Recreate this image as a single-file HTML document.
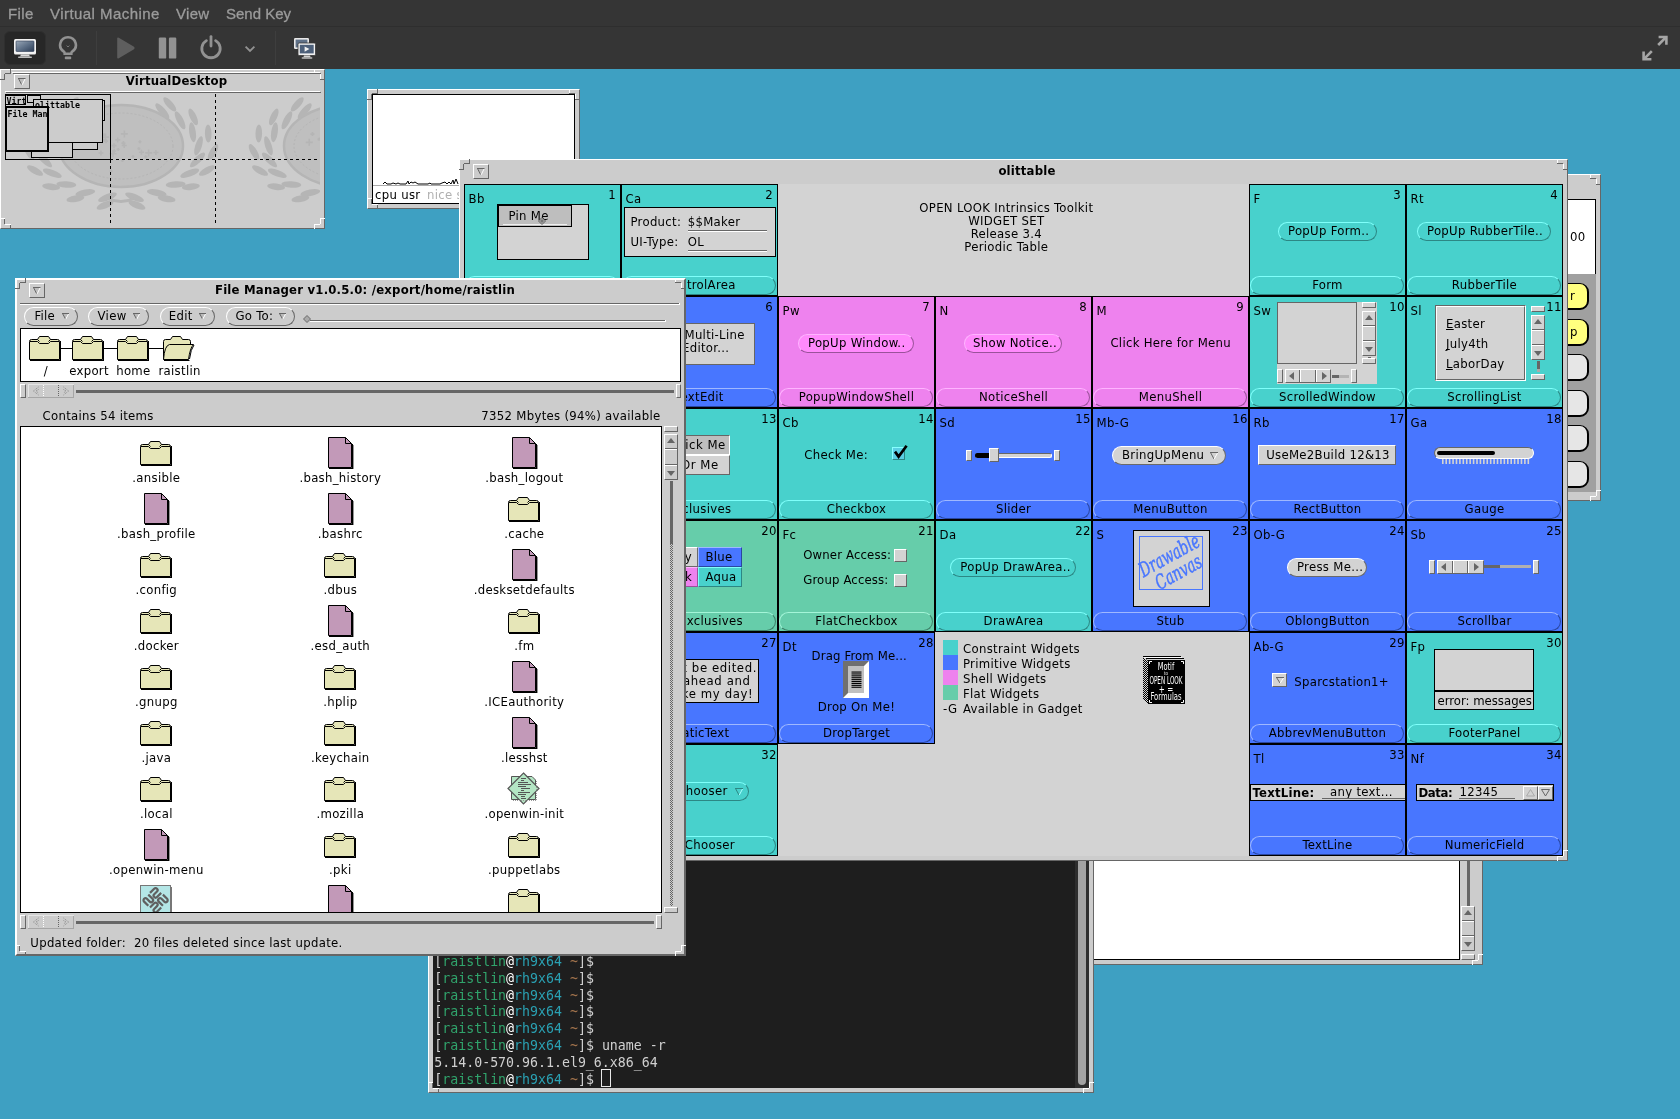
<!DOCTYPE html>
<html><head><meta charset="utf-8"><title>OpenWindows VM</title><style>
html,body{margin:0;padding:0;}
body{width:1680px;height:1119px;overflow:hidden;position:relative;background:#3ea0c2;font-family:'DejaVu Sans Condensed','DejaVu Sans','Liberation Sans',sans-serif;font-size:13px;color:#000;}
div,span,svg{position:absolute;box-sizing:border-box;}
.t span,.m span,.t u{position:static;}
.t{white-space:pre;letter-spacing:0.3px;text-decoration-skip-ink:none;}
.m{white-space:pre;font-family:'DejaVu Sans Mono','Liberation Mono',monospace;}
.tb{white-space:pre;font-family:'Liberation Sans',sans-serif;-webkit-text-stroke:0.3px #9b9b9b;}
.win{background:#cccccc;}
.pill{border:1px solid;border-radius:10px;}
</style></head><body>
<div id="root" style="left:0;top:0;width:1680px;height:1119px;will-change:transform;">
<div style="left:0px;top:0px;width:1680px;height:69px;background:#353535;"></div>
<div style="left:0px;top:26px;width:1680px;height:1px;background:#2e2e2e;"></div>
<span class="tb" style="left:8px;top:4.3px;line-height:19px;font-size:15px;color:#9b9b9b;letter-spacing:0.4px;">File</span>
<span class="tb" style="left:50px;top:4.3px;line-height:19px;font-size:15px;color:#9b9b9b;letter-spacing:0.45px;">Virtual Machine</span>
<span class="tb" style="left:176px;top:4.3px;line-height:19px;font-size:15px;color:#9b9b9b;letter-spacing:0.3px;">View</span>
<span class="tb" style="left:226px;top:4.3px;line-height:19px;font-size:15px;color:#9b9b9b;letter-spacing:0px;">Send Key</span>
<div style="left:4px;top:31px;width:42px;height:34px;background:#272727;border-radius:6px;border:1px solid #2f2f2f;"></div>
<svg style="left:13px;top:38px;" width="24" height="21" viewBox="0 0 24 21"><defs><linearGradient id="scr" x1="0" y1="0" x2="1" y2="1"><stop offset="0" stop-color="#9aa8b8"/><stop offset="0.5" stop-color="#5f7188"/><stop offset="1" stop-color="#2b3c55"/></linearGradient></defs>
<rect x="1" y="1" width="22" height="15.5" rx="1.5" fill="#f2f2f2"/><rect x="3" y="3" width="18" height="10.5" rx="0.8" fill="url(#scr)" stroke="#2f3d55" stroke-width="0.6"/>
<path d="M8,16.5 L16,16.5 L17,18.5 L7,18.5 Z" fill="#d8d8d8"/><rect x="5" y="18.5" width="14" height="1.6" rx="0.8" fill="#bdbdbd"/></svg>
<svg style="left:58px;top:35px;" width="20" height="26" viewBox="0 0 20 26"><path d="M10,2.2 a7.8,7.8 0 0 1 4.2,14.4 c-0.6,0.5 -0.9,1.2 -0.9,2.2 l-6.6,0 c0,-1 -0.3,-1.7 -0.9,-2.2 A7.8,7.8 0 0 1 10,2.2 Z" fill="none" stroke="#929292" stroke-width="2.6"/>
<rect x="6.8" y="21.6" width="6.4" height="2.6" rx="0.8" fill="#929292"/><path d="M8.6,10.6 L10,12 L11.4,10.6" stroke="#777" stroke-width="1" fill="none"/></svg>
<div style="left:96px;top:31px;width:1px;height:34px;background:#3e3e3e;"></div>
<svg style="left:115px;top:36px;" width="22" height="24" viewBox="0 0 22 24"><path d="M2.2,2.6 Q2.2,1 3.8,1.8 L19,10.8 Q20.4,12 19,13.2 L3.8,22.2 Q2.2,23 2.2,21.4 Z" fill="#5e5e5e"/></svg>
<svg style="left:158px;top:37px;" width="20" height="22" viewBox="0 0 20 22"><rect x="0.8" y="0.6" width="7.4" height="21" rx="1.2" fill="#929292"/><rect x="10.9" y="0.6" width="7.4" height="21" rx="1.2" fill="#929292"/></svg>
<svg style="left:199px;top:35px;" width="24" height="25" viewBox="0 0 24 25"><path d="M7.4,5.6 A9.2,9.2 0 1 0 16.6,5.6" fill="none" stroke="#929292" stroke-width="2.8" stroke-linecap="round"/><path d="M12,1.6 L12,11" stroke="#929292" stroke-width="2.8" stroke-linecap="round"/></svg>
<svg style="left:244px;top:45px;" width="12" height="8" viewBox="0 0 12 8"><path d="M1.6,1.6 L6,6 L10.4,1.6" fill="none" stroke="#929292" stroke-width="1.8"/></svg>
<div style="left:275px;top:31px;width:1px;height:34px;background:#3e3e3e;"></div>
<svg style="left:293px;top:37px;" width="24" height="23" viewBox="0 0 24 23"><rect x="1" y="1" width="15" height="11" rx="1.2" fill="#e8e8e8"/><rect x="2.6" y="2.6" width="11.8" height="7.8" fill="#5f7188"/>
<rect x="5" y="6" width="17.5" height="12.5" rx="1.2" fill="#f2f2f2" stroke="#353535" stroke-width="0.8"/><rect x="6.8" y="7.8" width="13.9" height="8.6" fill="#4d607a"/>
<path d="M11.6,9.4 L16.4,12.1 L11.6,14.8 Z" fill="#f2f2f2"/><path d="M11,18.5 L17,18.5 L17.6,20.3 L10.4,20.3 Z" fill="#d0d0d0"/><rect x="8.6" y="20.3" width="10.8" height="1.5" rx="0.7" fill="#bdbdbd"/></svg>
<svg style="left:1641px;top:34px;" width="28" height="28" viewBox="0 0 28 28"><g fill="none" stroke="#a6a6a6" stroke-width="2.6"><path d="M17.2,11 L24.6,3.6"/><path d="M17.6,3 L25.4,3 L25.4,10.8"/><path d="M10.8,17.2 L3.4,24.6"/><path d="M2.6,17.4 L2.6,25.2 L10.4,25.2"/></g></svg>
<div style="left:1500px;top:174px;width:101px;height:327px;background:#cccccc;border:1px solid;border-color:#ffffff #666666 #666666 #ffffff;"></div>
<svg style="left:1500px;top:174px;" width="11" height="11" viewBox="0 0 11 11"><line x1="10.5" y1="0" x2="10.5" y2="5" stroke="#666666"/><line x1="11" y1="4.5" x2="5" y2="4.5" stroke="#666666"/><line x1="4.5" y1="5" x2="4.5" y2="11" stroke="#666666"/><line x1="5" y1="10.5" x2="0" y2="10.5" stroke="#666666"/></svg>
<svg style="left:1590px;top:174px;" width="11" height="11" viewBox="0 0 11 11"><line x1="0.5" y1="0" x2="0.5" y2="5" stroke="#ffffff"/><line x1="0" y1="4.5" x2="6" y2="4.5" stroke="#666666"/><line x1="6.5" y1="5" x2="6.5" y2="11" stroke="#ffffff"/><line x1="6" y1="10.5" x2="11" y2="10.5" stroke="#666666"/></svg>
<svg style="left:1500px;top:490px;" width="11" height="11" viewBox="0 0 11 11"><line x1="10.5" y1="11" x2="10.5" y2="6" stroke="#666666"/><line x1="11" y1="6.5" x2="5" y2="6.5" stroke="#ffffff"/><line x1="4.5" y1="6" x2="4.5" y2="0" stroke="#666666"/><line x1="5" y1="0.5" x2="0" y2="0.5" stroke="#ffffff"/></svg>
<svg style="left:1590px;top:490px;" width="11" height="11" viewBox="0 0 11 11"><line x1="0.5" y1="11" x2="0.5" y2="6" stroke="#ffffff"/><line x1="0" y1="6.5" x2="6" y2="6.5" stroke="#ffffff"/><line x1="6.5" y1="6" x2="6.5" y2="0" stroke="#ffffff"/><line x1="6" y1="0.5" x2="11" y2="0.5" stroke="#ffffff"/></svg>
<div style="left:1505px;top:199px;width:91px;height:76px;background:#fff;border:1px solid #000;border-bottom:none;"></div>
<span class="t" style="left:1570px;top:229.3px;line-height:16px;">00</span>
<div style="left:1505px;top:274px;width:91px;height:218px;background:#a0a0a0;"></div>
<div style="left:1540px;top:283px;width:49px;height:27px;background:#ffff7f;border:1px solid #000;border-width:1px 2px 2px 1px;border-radius:9px;"></div>
<div style="left:1540px;top:318.6px;width:49px;height:27px;background:#ffff7f;border:1px solid #000;border-width:1px 2px 2px 1px;border-radius:9px;"></div>
<div style="left:1540px;top:354.2px;width:49px;height:27px;background:#e6e6e6;border:1px solid #000;border-width:1px 2px 2px 1px;border-radius:9px;"></div>
<div style="left:1540px;top:389.8px;width:49px;height:27px;background:#e6e6e6;border:1px solid #000;border-width:1px 2px 2px 1px;border-radius:9px;"></div>
<div style="left:1540px;top:425.4px;width:49px;height:27px;background:#e6e6e6;border:1px solid #000;border-width:1px 2px 2px 1px;border-radius:9px;"></div>
<div style="left:1540px;top:461px;width:49px;height:27px;background:#e6e6e6;border:1px solid #000;border-width:1px 2px 2px 1px;border-radius:9px;"></div>
<span class="t" style="left:1570px;top:288.3px;line-height:16px;">r</span>
<span class="t" style="left:1570px;top:324.3px;line-height:16px;">p</span>
<div style="left:1080px;top:840px;width:403px;height:125px;background:#cccccc;border:1px solid;border-color:#ffffff #666666 #666666 #ffffff;"></div>
<svg style="left:1080px;top:840px;" width="11" height="11" viewBox="0 0 11 11"><line x1="10.5" y1="0" x2="10.5" y2="5" stroke="#666666"/><line x1="11" y1="4.5" x2="5" y2="4.5" stroke="#666666"/><line x1="4.5" y1="5" x2="4.5" y2="11" stroke="#666666"/><line x1="5" y1="10.5" x2="0" y2="10.5" stroke="#666666"/></svg>
<svg style="left:1472px;top:840px;" width="11" height="11" viewBox="0 0 11 11"><line x1="0.5" y1="0" x2="0.5" y2="5" stroke="#ffffff"/><line x1="0" y1="4.5" x2="6" y2="4.5" stroke="#666666"/><line x1="6.5" y1="5" x2="6.5" y2="11" stroke="#ffffff"/><line x1="6" y1="10.5" x2="11" y2="10.5" stroke="#666666"/></svg>
<svg style="left:1080px;top:954px;" width="11" height="11" viewBox="0 0 11 11"><line x1="10.5" y1="11" x2="10.5" y2="6" stroke="#666666"/><line x1="11" y1="6.5" x2="5" y2="6.5" stroke="#ffffff"/><line x1="4.5" y1="6" x2="4.5" y2="0" stroke="#666666"/><line x1="5" y1="0.5" x2="0" y2="0.5" stroke="#ffffff"/></svg>
<svg style="left:1472px;top:954px;" width="11" height="11" viewBox="0 0 11 11"><line x1="0.5" y1="11" x2="0.5" y2="6" stroke="#ffffff"/><line x1="0" y1="6.5" x2="6" y2="6.5" stroke="#ffffff"/><line x1="6.5" y1="6" x2="6.5" y2="0" stroke="#ffffff"/><line x1="6" y1="0.5" x2="11" y2="0.5" stroke="#ffffff"/></svg>
<div style="left:1085px;top:845px;width:375px;height:115px;background:#fff;border:1px solid #000;"></div>
<div style="left:1467px;top:845px;width:3px;height:61px;background:#666666;"></div>
<div style="left:1461px;top:906px;width:14px;height:45px;background:#cccccc;border:1px solid;border-color:#ffffff #666666 #666666 #ffffff;"></div>
<div style="left:1462px;top:920px;width:12px;height:1px;background:#666666;"></div>
<div style="left:1462px;top:921px;width:12px;height:1px;background:#ffffff;"></div>
<div style="left:1462px;top:935px;width:12px;height:1px;background:#666666;"></div>
<div style="left:1462px;top:936px;width:12px;height:1px;background:#ffffff;"></div>
<svg style="left:1464px;top:909px;" width="8" height="8" viewBox="0 0 8 8"><path d="M0,6 L4.0,1 L8,6 Z" fill="#666666"/></svg>
<svg style="left:1464px;top:940px;" width="8" height="8" viewBox="0 0 8 8"><path d="M0,2 L4.0,7 L8,2 Z" fill="#666666"/></svg>
<div style="left:1461px;top:954px;width:14px;height:6px;background:#cccccc;border:1px solid;border-color:#ffffff #666666 #666666 #ffffff;"></div>
<div style="left:428px;top:760px;width:666px;height:333px;background:#cccccc;border:1px solid;border-color:#ffffff #666666 #666666 #ffffff;"></div>
<svg style="left:428px;top:760px;" width="11" height="11" viewBox="0 0 11 11"><line x1="10.5" y1="0" x2="10.5" y2="5" stroke="#666666"/><line x1="11" y1="4.5" x2="5" y2="4.5" stroke="#666666"/><line x1="4.5" y1="5" x2="4.5" y2="11" stroke="#666666"/><line x1="5" y1="10.5" x2="0" y2="10.5" stroke="#666666"/></svg>
<svg style="left:1083px;top:760px;" width="11" height="11" viewBox="0 0 11 11"><line x1="0.5" y1="0" x2="0.5" y2="5" stroke="#ffffff"/><line x1="0" y1="4.5" x2="6" y2="4.5" stroke="#666666"/><line x1="6.5" y1="5" x2="6.5" y2="11" stroke="#ffffff"/><line x1="6" y1="10.5" x2="11" y2="10.5" stroke="#666666"/></svg>
<svg style="left:428px;top:1082px;" width="11" height="11" viewBox="0 0 11 11"><line x1="10.5" y1="11" x2="10.5" y2="6" stroke="#666666"/><line x1="11" y1="6.5" x2="5" y2="6.5" stroke="#ffffff"/><line x1="4.5" y1="6" x2="4.5" y2="0" stroke="#666666"/><line x1="5" y1="0.5" x2="0" y2="0.5" stroke="#ffffff"/></svg>
<svg style="left:1083px;top:1082px;" width="11" height="11" viewBox="0 0 11 11"><line x1="0.5" y1="11" x2="0.5" y2="6" stroke="#ffffff"/><line x1="0" y1="6.5" x2="6" y2="6.5" stroke="#ffffff"/><line x1="6.5" y1="6" x2="6.5" y2="0" stroke="#ffffff"/><line x1="6" y1="0.5" x2="11" y2="0.5" stroke="#ffffff"/></svg>
<div style="left:433px;top:790px;width:656px;height:298px;background:#1e1e1e;"></div>
<div style="left:1075px;top:790px;width:14px;height:298px;background:#2d2d2d;"></div>
<div style="left:1078px;top:792px;width:8px;height:293px;background:#a3a3a3;border-radius:4px;"></div>
<span class="m" style="left:434.3px;top:952.92px;line-height:17px;font-size:13.25px;color:#d0d0d0;"><span style="color:#d0d0d0">[</span><span style="color:#30a46c">raistlin</span><span style="color:#fff">@</span><span style="color:#2aa1b3">rh9x64</span> <span style="color:#a2734c">~</span><span style="color:#d0d0d0">]$</span></span>
<span class="m" style="left:434.3px;top:969.72px;line-height:17px;font-size:13.25px;color:#d0d0d0;"><span style="color:#d0d0d0">[</span><span style="color:#30a46c">raistlin</span><span style="color:#fff">@</span><span style="color:#2aa1b3">rh9x64</span> <span style="color:#a2734c">~</span><span style="color:#d0d0d0">]$</span></span>
<span class="m" style="left:434.3px;top:986.52px;line-height:17px;font-size:13.25px;color:#d0d0d0;"><span style="color:#d0d0d0">[</span><span style="color:#30a46c">raistlin</span><span style="color:#fff">@</span><span style="color:#2aa1b3">rh9x64</span> <span style="color:#a2734c">~</span><span style="color:#d0d0d0">]$</span></span>
<span class="m" style="left:434.3px;top:1003.32px;line-height:17px;font-size:13.25px;color:#d0d0d0;"><span style="color:#d0d0d0">[</span><span style="color:#30a46c">raistlin</span><span style="color:#fff">@</span><span style="color:#2aa1b3">rh9x64</span> <span style="color:#a2734c">~</span><span style="color:#d0d0d0">]$</span></span>
<span class="m" style="left:434.3px;top:1020.12px;line-height:17px;font-size:13.25px;color:#d0d0d0;"><span style="color:#d0d0d0">[</span><span style="color:#30a46c">raistlin</span><span style="color:#fff">@</span><span style="color:#2aa1b3">rh9x64</span> <span style="color:#a2734c">~</span><span style="color:#d0d0d0">]$</span></span>
<span class="m" style="left:434.3px;top:1036.92px;line-height:17px;font-size:13.25px;color:#d0d0d0;"><span style="color:#d0d0d0">[</span><span style="color:#30a46c">raistlin</span><span style="color:#fff">@</span><span style="color:#2aa1b3">rh9x64</span> <span style="color:#a2734c">~</span><span style="color:#d0d0d0">]$</span><span style="color:#d0d0d0"> uname -r</span></span>
<span class="m" style="left:434.3px;top:1053.72px;line-height:17px;font-size:13.25px;color:#d0d0d0;"><span style="color:#d0d0d0">5.14.0-570.96.1.el9_6.x86_64</span></span>
<span class="m" style="left:434.3px;top:1070.52px;line-height:17px;font-size:13.25px;color:#d0d0d0;"><span style="color:#d0d0d0">[</span><span style="color:#30a46c">raistlin</span><span style="color:#fff">@</span><span style="color:#2aa1b3">rh9x64</span> <span style="color:#a2734c">~</span><span style="color:#d0d0d0">]$</span></span>
<div style="left:601px;top:1069px;width:10px;height:18px;border:1px solid #e8e8e8;"></div>
<div style="left:367px;top:89px;width:213px;height:120px;background:#cccccc;border:1px solid;border-color:#ffffff #666666 #666666 #ffffff;"></div>
<svg style="left:367px;top:89px;" width="11" height="11" viewBox="0 0 11 11"><line x1="10.5" y1="0" x2="10.5" y2="5" stroke="#666666"/><line x1="11" y1="4.5" x2="5" y2="4.5" stroke="#666666"/><line x1="4.5" y1="5" x2="4.5" y2="11" stroke="#666666"/><line x1="5" y1="10.5" x2="0" y2="10.5" stroke="#666666"/></svg>
<svg style="left:569px;top:89px;" width="11" height="11" viewBox="0 0 11 11"><line x1="0.5" y1="0" x2="0.5" y2="5" stroke="#ffffff"/><line x1="0" y1="4.5" x2="6" y2="4.5" stroke="#666666"/><line x1="6.5" y1="5" x2="6.5" y2="11" stroke="#ffffff"/><line x1="6" y1="10.5" x2="11" y2="10.5" stroke="#666666"/></svg>
<svg style="left:367px;top:198px;" width="11" height="11" viewBox="0 0 11 11"><line x1="10.5" y1="11" x2="10.5" y2="6" stroke="#666666"/><line x1="11" y1="6.5" x2="5" y2="6.5" stroke="#ffffff"/><line x1="4.5" y1="6" x2="4.5" y2="0" stroke="#666666"/><line x1="5" y1="0.5" x2="0" y2="0.5" stroke="#ffffff"/></svg>
<svg style="left:569px;top:198px;" width="11" height="11" viewBox="0 0 11 11"><line x1="0.5" y1="11" x2="0.5" y2="6" stroke="#ffffff"/><line x1="0" y1="6.5" x2="6" y2="6.5" stroke="#ffffff"/><line x1="6.5" y1="6" x2="6.5" y2="0" stroke="#ffffff"/><line x1="6" y1="0.5" x2="11" y2="0.5" stroke="#ffffff"/></svg>
<div style="left:372px;top:94px;width:203px;height:110px;background:#fff;border:1px solid #000;"></div>
<div style="left:373px;top:185px;width:201px;height:1px;background:#aaa;"></div>
<svg style="left:373px;top:170px;" width="100" height="16" viewBox="0 0 100 16"><path d="M10,14 L12,12 L14,14 L18,14 L20,13 L23,14 L25,13 L27,14 L33,14 L35,11 L36,14 L38,12 L40,13 L42,12 L45,14 L55,14 L57,13 L58,14 L67,14 L69,13 L72,12 L74,14 L76,12 L78,14 L80,10 L81,14 L83,9 L85,14" fill="none" stroke="#000" stroke-width="1"/></svg>
<span class="t" style="left:375px;top:187.3px;line-height:16px;">cpu usr</span>
<span class="t" style="left:427px;top:187.3px;line-height:16px;color:#b0b0b0;">nice sys</span>
<div style="left:459px;top:159px;width:1109px;height:702px;background:#cccccc;border-style:solid;border-width:1px;border-color:#ffffff #666666 #666666 #ffffff;"></div>
<svg style="left:459px;top:159px;" width="11" height="11" viewBox="0 0 11 11"><line x1="10.5" y1="0" x2="10.5" y2="5" stroke="#666666"/><line x1="11" y1="4.5" x2="5" y2="4.5" stroke="#666666"/><line x1="4.5" y1="5" x2="4.5" y2="11" stroke="#666666"/><line x1="5" y1="10.5" x2="0" y2="10.5" stroke="#666666"/></svg>
<svg style="left:1557px;top:159px;" width="11" height="11" viewBox="0 0 11 11"><line x1="0.5" y1="0" x2="0.5" y2="5" stroke="#ffffff"/><line x1="0" y1="4.5" x2="6" y2="4.5" stroke="#666666"/><line x1="6.5" y1="5" x2="6.5" y2="11" stroke="#ffffff"/><line x1="6" y1="10.5" x2="11" y2="10.5" stroke="#666666"/></svg>
<svg style="left:459px;top:850px;" width="11" height="11" viewBox="0 0 11 11"><line x1="10.5" y1="11" x2="10.5" y2="6" stroke="#666666"/><line x1="11" y1="6.5" x2="5" y2="6.5" stroke="#ffffff"/><line x1="4.5" y1="6" x2="4.5" y2="0" stroke="#666666"/><line x1="5" y1="0.5" x2="0" y2="0.5" stroke="#ffffff"/></svg>
<svg style="left:1557px;top:850px;" width="11" height="11" viewBox="0 0 11 11"><line x1="0.5" y1="11" x2="0.5" y2="6" stroke="#ffffff"/><line x1="0" y1="6.5" x2="6" y2="6.5" stroke="#ffffff"/><line x1="6.5" y1="6" x2="6.5" y2="0" stroke="#ffffff"/><line x1="6" y1="0.5" x2="11" y2="0.5" stroke="#ffffff"/></svg>
<div style="left:473px;top:164px;width:16px;height:15px;background:#cccccc;border:1px solid;border-color:#ffffff #666666 #666666 #ffffff;"></div>
<svg style="left:477px;top:168px;" width="9" height="8" viewBox="0 0 9 8"><path d="M0.8,0.8 L7.4,0.8 L4,6.6 Z" fill="#bdbdbd"/><path d="M0,0.5 L7.5,0.5" stroke="#666666"/><path d="M0.5,0.5 L3.6,6.6" stroke="#666666" fill="none"/><path d="M7,1 L4.2,6.8" stroke="#ffffff" fill="none"/></svg>
<span class="t" style="left:1027px;top:163.3px;line-height:16px;font-weight:bold;letter-spacing:0.2px;transform:translateX(-50%);">olittable</span>
<div style="left:464px;top:184px;width:1099px;height:672px;background:#d3d3d3;"></div>
<div style="left:464px;top:184px;width:157px;height:112px;background:#48d1cc;border:1px solid #000;"></div>
<span class="t" style="left:468.6px;top:191px;line-height:16px;">Bb</span>
<span class="t" style="left:612px;top:187.3px;line-height:16px;transform:translateX(-50%);">1</span>
<div style="left:465px;top:276px;width:154px;height:19px;background:#48d1cc;border:1px solid;border-color:#7ffffa #2c8784 #2c8784 #7ffffa;border-radius:9.5px;"></div>
<span class="t" style="left:542.5px;top:276.8px;line-height:16px;transform:translateX(-50%);">BulletinBoard</span>
<div style="left:497px;top:204px;width:92px;height:56px;background:#d3d3d3;border:1px solid #000;"></div>
<div style="left:498px;top:205px;width:74px;height:22px;background:#bebebe;border:1px solid #000;"></div>
<span class="t" style="left:508.5px;top:208.1px;line-height:16px;">Pin Me</span>
<div style="left:503px;top:224px;width:64px;height:1px;background:#efefef;"></div>
<svg style="left:538px;top:217px;" width="8" height="8" viewBox="0 0 8 8"><path d="M4,0.5 L7.5,4 L4,7.5 L0.5,4 Z" fill="#bbb" stroke="#333" stroke-width="0.7"/><path d="M2,4 L6,4 M4,2 L4,6" stroke="#333" stroke-width="0.6"/></svg>
<div style="left:621px;top:184px;width:157px;height:112px;background:#48d1cc;border:1px solid #000;"></div>
<span class="t" style="left:625.6px;top:191px;line-height:16px;">Ca</span>
<span class="t" style="left:769px;top:187.3px;line-height:16px;transform:translateX(-50%);">2</span>
<div style="left:622px;top:276px;width:154px;height:19px;background:#48d1cc;border:1px solid;border-color:#7ffffa #2c8784 #2c8784 #7ffffa;border-radius:9.5px;"></div>
<span class="t" style="left:699.5px;top:276.8px;line-height:16px;transform:translateX(-50%);">ControlArea</span>
<div style="left:624px;top:207px;width:152px;height:50px;background:#d3d3d3;border:1px solid #000;"></div>
<span class="t" style="left:630.5px;top:214.3px;line-height:16px;">Product:</span>
<span class="t" style="left:687.7px;top:214.3px;line-height:16px;">$$Maker</span>
<span class="t" style="left:630.5px;top:234.3px;line-height:16px;">UI-Type:</span>
<span class="t" style="left:687.7px;top:234.3px;line-height:16px;">OL</span>
<div style="left:688px;top:230px;width:79px;height:1px;background:#666666;"></div>
<div style="left:688px;top:231px;width:79px;height:1px;background:#ffffff;"></div>
<div style="left:688px;top:250px;width:79px;height:1px;background:#666666;"></div>
<div style="left:688px;top:251px;width:79px;height:1px;background:#ffffff;"></div>
<span class="t" style="left:1006.3px;top:199.8px;line-height:16px;transform:translateX(-50%);">OPEN LOOK Intrinsics Toolkit</span>
<span class="t" style="left:1006.3px;top:212.8px;line-height:16px;transform:translateX(-50%);">WIDGET SET</span>
<span class="t" style="left:1006.3px;top:225.8px;line-height:16px;transform:translateX(-50%);">Release 3.4</span>
<span class="t" style="left:1006.3px;top:238.8px;line-height:16px;transform:translateX(-50%);">Periodic Table</span>
<div style="left:1249px;top:184px;width:157px;height:112px;background:#48d1cc;border:1px solid #000;"></div>
<span class="t" style="left:1253.6px;top:191px;line-height:16px;">F</span>
<span class="t" style="left:1397px;top:187.3px;line-height:16px;transform:translateX(-50%);">3</span>
<div style="left:1250px;top:276px;width:154px;height:19px;background:#48d1cc;border:1px solid;border-color:#7ffffa #2c8784 #2c8784 #7ffffa;border-radius:9.5px;"></div>
<span class="t" style="left:1327.5px;top:276.8px;line-height:16px;transform:translateX(-50%);">Form</span>
<div style="left:1278px;top:222px;width:99px;height:19px;background:#48d1cc;border:1px solid;border-color:#7ffffa #2c8784 #2c8784 #7ffffa;border-radius:9.5px;"></div>
<span class="t" style="left:1288px;top:222.9px;line-height:16px;">PopUp Form..</span>
<div style="left:1406px;top:184px;width:157px;height:112px;background:#48d1cc;border:1px solid #000;"></div>
<span class="t" style="left:1410.6px;top:191px;line-height:16px;">Rt</span>
<span class="t" style="left:1554px;top:187.3px;line-height:16px;transform:translateX(-50%);">4</span>
<div style="left:1407px;top:276px;width:154px;height:19px;background:#48d1cc;border:1px solid;border-color:#7ffffa #2c8784 #2c8784 #7ffffa;border-radius:9.5px;"></div>
<span class="t" style="left:1484.5px;top:276.8px;line-height:16px;transform:translateX(-50%);">RubberTile</span>
<div style="left:1417px;top:222px;width:134px;height:19px;background:#48d1cc;border:1px solid;border-color:#7ffffa #2c8784 #2c8784 #7ffffa;border-radius:9.5px;"></div>
<span class="t" style="left:1427px;top:222.9px;line-height:16px;">PopUp RubberTile..</span>
<div style="left:464px;top:296px;width:157px;height:112px;background:#4876ff;border:1px solid #000;"></div>
<span class="t" style="left:612px;top:299.3px;line-height:16px;transform:translateX(-50%);">5</span>
<div style="left:465px;top:388px;width:154px;height:19px;background:#4876ff;border:1px solid;border-color:#9fb8ff #2a47a0 #2a47a0 #9fb8ff;border-radius:9.5px;"></div>
<div style="left:621px;top:296px;width:157px;height:112px;background:#4876ff;border:1px solid #000;"></div>
<span class="t" style="left:769px;top:299.3px;line-height:16px;transform:translateX(-50%);">6</span>
<div style="left:622px;top:388px;width:154px;height:19px;background:#4876ff;border:1px solid;border-color:#9fb8ff #2a47a0 #2a47a0 #9fb8ff;border-radius:9.5px;"></div>
<span class="t" style="left:699.5px;top:388.8px;line-height:16px;transform:translateX(-50%);">TextEdit</span>
<div style="left:640px;top:323px;width:115px;height:42px;background:#d3d3d3;border:1px solid #666666;"></div>
<span class="t" style="left:684.5px;top:327.3px;line-height:16px;">Multi-Line</span>
<span class="t" style="left:682px;top:340.1px;line-height:16px;">Editor...</span>
<div style="left:778px;top:296px;width:157px;height:112px;background:#ee82ee;border:1px solid #000;"></div>
<span class="t" style="left:782.6px;top:303px;line-height:16px;">Pw</span>
<span class="t" style="left:926px;top:299.3px;line-height:16px;transform:translateX(-50%);">7</span>
<div style="left:779px;top:388px;width:154px;height:19px;background:#ee82ee;border:1px solid;border-color:#ffb4ff #9a529a #9a529a #ffb4ff;border-radius:9.5px;"></div>
<span class="t" style="left:856.5px;top:388.8px;line-height:16px;transform:translateX(-50%);">PopupWindowShell</span>
<div style="left:798px;top:334px;width:116px;height:19px;background:#ff8afc;border:1px solid;border-color:#ffb4ff #9a529a #9a529a #ffb4ff;border-radius:9.5px;"></div>
<span class="t" style="left:808px;top:334.9px;line-height:16px;">PopUp Window..</span>
<div style="left:935px;top:296px;width:157px;height:112px;background:#ee82ee;border:1px solid #000;"></div>
<span class="t" style="left:939.6px;top:303px;line-height:16px;">N</span>
<span class="t" style="left:1083px;top:299.3px;line-height:16px;transform:translateX(-50%);">8</span>
<div style="left:936px;top:388px;width:154px;height:19px;background:#ee82ee;border:1px solid;border-color:#ffb4ff #9a529a #9a529a #ffb4ff;border-radius:9.5px;"></div>
<span class="t" style="left:1013.5px;top:388.8px;line-height:16px;transform:translateX(-50%);">NoticeShell</span>
<div style="left:964px;top:334px;width:98px;height:19px;background:#ff8afc;border:1px solid;border-color:#ffb4ff #9a529a #9a529a #ffb4ff;border-radius:9.5px;"></div>
<span class="t" style="left:973px;top:334.9px;line-height:16px;">Show Notice..</span>
<div style="left:1092px;top:296px;width:157px;height:112px;background:#ee82ee;border:1px solid #000;"></div>
<span class="t" style="left:1096.6px;top:303px;line-height:16px;">M</span>
<span class="t" style="left:1240px;top:299.3px;line-height:16px;transform:translateX(-50%);">9</span>
<div style="left:1093px;top:388px;width:154px;height:19px;background:#ee82ee;border:1px solid;border-color:#ffb4ff #9a529a #9a529a #ffb4ff;border-radius:9.5px;"></div>
<span class="t" style="left:1170.5px;top:388.8px;line-height:16px;transform:translateX(-50%);">MenuShell</span>
<span class="t" style="left:1110.4px;top:335.4px;line-height:16px;">Click Here for Menu</span>
<div style="left:1249px;top:296px;width:157px;height:112px;background:#48d1cc;border:1px solid #000;"></div>
<span class="t" style="left:1253.6px;top:303px;line-height:16px;">Sw</span>
<span class="t" style="left:1397px;top:299.3px;line-height:16px;transform:translateX(-50%);">10</span>
<div style="left:1250px;top:388px;width:154px;height:19px;background:#48d1cc;border:1px solid;border-color:#7ffffa #2c8784 #2c8784 #7ffffa;border-radius:9.5px;"></div>
<span class="t" style="left:1327.5px;top:388.8px;line-height:16px;transform:translateX(-50%);">ScrolledWindow</span>
<div style="left:1277px;top:302px;width:100px;height:82px;background:#d3d3d3;"></div>
<div style="left:1277px;top:302px;width:80px;height:62px;background:#d3d3d3;border:1px solid #666666;"></div>
<div style="left:1362px;top:302px;width:14px;height:6px;background:#d3d3d3;border:1px solid;border-color:#ffffff #666666 #666666 #ffffff;"></div>
<div style="left:1362px;top:311px;width:14px;height:45px;background:#d3d3d3;border:1px solid;border-color:#ffffff #666666 #666666 #ffffff;"></div>
<div style="left:1363px;top:325px;width:12px;height:1px;background:#666666;"></div>
<div style="left:1363px;top:326px;width:12px;height:1px;background:#ffffff;"></div>
<div style="left:1363px;top:340px;width:12px;height:1px;background:#666666;"></div>
<div style="left:1363px;top:341px;width:12px;height:1px;background:#ffffff;"></div>
<svg style="left:1365px;top:314px;" width="8" height="8" viewBox="0 0 8 8"><path d="M0,6 L4.0,1 L8,6 Z" fill="#666666"/></svg>
<svg style="left:1365px;top:345px;" width="8" height="8" viewBox="0 0 8 8"><path d="M0,2 L4.0,7 L8,2 Z" fill="#666666"/></svg>
<div style="left:1368px;top:356.5px;width:3px;height:1px;background:#666666;"></div>
<div style="left:1362px;top:358px;width:14px;height:6px;background:#d3d3d3;border:1px solid;border-color:#ffffff #666666 #666666 #ffffff;"></div>
<div style="left:1277px;top:369px;width:6px;height:14px;background:#d3d3d3;border:1px solid;border-color:#ffffff #666666 #666666 #ffffff;"></div>
<div style="left:1285px;top:369px;width:45.99px;height:14px;background:#d3d3d3;border:1px solid;border-color:#ffffff #666666 #666666 #ffffff;"></div>
<div style="left:1299.33px;top:370px;width:1px;height:12px;background:#666666;"></div>
<div style="left:1300.33px;top:370px;width:1px;height:12px;background:#ffffff;"></div>
<div style="left:1314.66px;top:370px;width:1px;height:12px;background:#666666;"></div>
<div style="left:1315.66px;top:370px;width:1px;height:12px;background:#ffffff;"></div>
<svg style="left:1288px;top:372px;" width="8" height="8" viewBox="0 0 8 8"><path d="M6,0 L1,4.0 L6,8 Z" fill="#666666"/></svg>
<svg style="left:1319.66px;top:372px;" width="8" height="8" viewBox="0 0 8 8"><path d="M2,0 L7,4.0 L2,8 Z" fill="#666666"/></svg>
<div style="left:1332px;top:375px;width:7px;height:3px;background:#666666;"></div>
<div style="left:1339px;top:375px;width:10px;height:3px;background:#b4b4b4;"></div>
<div style="left:1351px;top:369px;width:6px;height:14px;background:#d3d3d3;border:1px solid;border-color:#ffffff #666666 #666666 #ffffff;"></div>
<div style="left:1406px;top:296px;width:157px;height:112px;background:#48d1cc;border:1px solid #000;"></div>
<span class="t" style="left:1410.6px;top:303px;line-height:16px;">Sl</span>
<span class="t" style="left:1554px;top:299.3px;line-height:16px;transform:translateX(-50%);">11</span>
<div style="left:1407px;top:388px;width:154px;height:19px;background:#48d1cc;border:1px solid;border-color:#7ffffa #2c8784 #2c8784 #7ffffa;border-radius:9.5px;"></div>
<span class="t" style="left:1484.5px;top:388.8px;line-height:16px;transform:translateX(-50%);">ScrollingList</span>
<div style="left:1435px;top:305px;width:91px;height:76px;background:#d3d3d3;border:1px solid;border-color:#666666 #ffffff #ffffff #666666;"></div>
<div style="left:1436px;top:306px;width:89px;height:74px;border:1px solid;border-color:#ffffff #666666 #666666 #ffffff;"></div>
<span class="t" style="left:1446px;top:316.3px;line-height:16px;"><u>E</u>aster</span>
<span class="t" style="left:1446px;top:336.3px;line-height:16px;"><u>J</u>uly4th</span>
<span class="t" style="left:1446px;top:356.3px;line-height:16px;"><u>L</u>aborDay</span>
<div style="left:1531px;top:306px;width:14px;height:6px;background:#d3d3d3;border:1px solid;border-color:#ffffff #666666 #666666 #ffffff;"></div>
<div style="left:1531px;top:315px;width:14px;height:45px;background:#d3d3d3;border:1px solid;border-color:#ffffff #666666 #666666 #ffffff;"></div>
<div style="left:1532px;top:329px;width:12px;height:1px;background:#666666;"></div>
<div style="left:1532px;top:330px;width:12px;height:1px;background:#ffffff;"></div>
<div style="left:1532px;top:344px;width:12px;height:1px;background:#666666;"></div>
<div style="left:1532px;top:345px;width:12px;height:1px;background:#ffffff;"></div>
<svg style="left:1534px;top:318px;" width="8" height="8" viewBox="0 0 8 8"><path d="M0,6 L4.0,1 L8,6 Z" fill="#666666"/></svg>
<svg style="left:1534px;top:349px;" width="8" height="8" viewBox="0 0 8 8"><path d="M0,2 L4.0,7 L8,2 Z" fill="#666666"/></svg>
<div style="left:1537px;top:361px;width:3px;height:8px;background:#666666;"></div>
<div style="left:1537px;top:369px;width:3px;height:3px;background:#aaa;"></div>
<div style="left:1531px;top:374px;width:14px;height:6px;background:#d3d3d3;border:1px solid;border-color:#ffffff #666666 #666666 #ffffff;"></div>
<div style="left:464px;top:408px;width:157px;height:112px;background:#48d1cc;border:1px solid #000;"></div>
<span class="t" style="left:612px;top:411.3px;line-height:16px;transform:translateX(-50%);">12</span>
<div style="left:465px;top:500px;width:154px;height:19px;background:#48d1cc;border:1px solid;border-color:#7ffffa #2c8784 #2c8784 #7ffffa;border-radius:9.5px;"></div>
<div style="left:621px;top:408px;width:157px;height:112px;background:#48d1cc;border:1px solid #000;"></div>
<span class="t" style="left:769px;top:411.3px;line-height:16px;transform:translateX(-50%);">13</span>
<div style="left:622px;top:500px;width:154px;height:19px;background:#48d1cc;border:1px solid;border-color:#7ffffa #2c8784 #2c8784 #7ffffa;border-radius:9.5px;"></div>
<span class="t" style="left:699.5px;top:500.8px;line-height:16px;transform:translateX(-50%);">Exclusives</span>
<div style="left:660px;top:435px;width:70px;height:20px;background:#bebebe;border:1px solid;border-color:#666666 #ffffff #ffffff #666666;"></div>
<div style="left:660px;top:455px;width:70px;height:20px;background:#d3d3d3;border:1px solid;border-color:#ffffff #666666 #666666 #ffffff;"></div>
<span class="t" style="left:725.8px;top:436.7px;line-height:16px;letter-spacing:0.5px;transform:translateX(-100%);">Click Me</span>
<span class="t" style="left:718.6px;top:457.3px;line-height:16px;letter-spacing:0.5px;transform:translateX(-100%);">Or Me</span>
<div style="left:778px;top:408px;width:157px;height:112px;background:#48d1cc;border:1px solid #000;"></div>
<span class="t" style="left:782.6px;top:415px;line-height:16px;">Cb</span>
<span class="t" style="left:926px;top:411.3px;line-height:16px;transform:translateX(-50%);">14</span>
<div style="left:779px;top:500px;width:154px;height:19px;background:#48d1cc;border:1px solid;border-color:#7ffffa #2c8784 #2c8784 #7ffffa;border-radius:9.5px;"></div>
<span class="t" style="left:856.5px;top:500.8px;line-height:16px;transform:translateX(-50%);">Checkbox</span>
<span class="t" style="left:804.3px;top:447.3px;line-height:16px;">Check Me:</span>
<div style="left:892px;top:447px;width:13px;height:13px;background:#5bcfe4;border:1px solid;border-color:#8ff #2c8784 #2c8784 #8ff;"></div>
<svg style="left:892px;top:443px;" width="18" height="18" viewBox="0 0 18 18"><path d="M3,8.6 L6.6,13.6 L14.6,2.8" fill="none" stroke="#000" stroke-width="2.7"/></svg>
<div style="left:935px;top:408px;width:157px;height:112px;background:#4876ff;border:1px solid #000;"></div>
<span class="t" style="left:939.6px;top:415px;line-height:16px;">Sd</span>
<span class="t" style="left:1083px;top:411.3px;line-height:16px;transform:translateX(-50%);">15</span>
<div style="left:936px;top:500px;width:154px;height:19px;background:#4876ff;border:1px solid;border-color:#9fb8ff #2a47a0 #2a47a0 #9fb8ff;border-radius:9.5px;"></div>
<span class="t" style="left:1013.5px;top:500.8px;line-height:16px;transform:translateX(-50%);">Slider</span>
<div style="left:966px;top:450px;width:6px;height:11px;background:#d3d3d3;border:1px solid;border-color:#ffffff #666666 #666666 #ffffff;"></div>
<div style="left:975px;top:453px;width:77px;height:5px;background:#d3d3d3;border:1px solid;border-color:#666666 #ffffff #ffffff #666666;border-radius:2.5px;"></div>
<div style="left:975px;top:453px;width:16px;height:5px;background:#000;border-radius:2.5px 0 0 2.5px;"></div>
<div style="left:989px;top:448px;width:10px;height:14px;background:#d3d3d3;border:1px solid;border-color:#ffffff #666666 #666666 #ffffff;"></div>
<div style="left:1054px;top:450px;width:6px;height:11px;background:#d3d3d3;border:1px solid;border-color:#ffffff #666666 #666666 #ffffff;"></div>
<div style="left:1092px;top:408px;width:157px;height:112px;background:#4876ff;border:1px solid #000;"></div>
<span class="t" style="left:1096.6px;top:415px;line-height:16px;">Mb-G</span>
<span class="t" style="left:1240px;top:411.3px;line-height:16px;transform:translateX(-50%);">16</span>
<div style="left:1093px;top:500px;width:154px;height:19px;background:#4876ff;border:1px solid;border-color:#9fb8ff #2a47a0 #2a47a0 #9fb8ff;border-radius:9.5px;"></div>
<span class="t" style="left:1170.5px;top:500.8px;line-height:16px;transform:translateX(-50%);">MenuButton</span>
<div style="left:1112px;top:446px;width:114px;height:19px;background:#d3d3d3;border:1px solid;border-color:#ffffff #6a6a6a #6a6a6a #ffffff;border-radius:9.5px;"></div>
<span class="t" style="left:1122px;top:447px;line-height:16px;">BringUpMenu</span>
<svg style="left:1210px;top:452px;" width="9" height="8" viewBox="0 0 9 8"><path d="M0.5,0.5 L4.0,7 L7.5,0.5 Z" fill="none" stroke="none"/><path d="M0,0.5 L8,0.5" stroke="#666666"/><path d="M0.5,0.5 L4.0,7" stroke="#666666" fill="none"/><path d="M7.5,1 L4.3,7" stroke="#ffffff" fill="none"/></svg>
<div style="left:1249px;top:408px;width:157px;height:112px;background:#4876ff;border:1px solid #000;"></div>
<span class="t" style="left:1253.6px;top:415px;line-height:16px;">Rb</span>
<span class="t" style="left:1397px;top:411.3px;line-height:16px;transform:translateX(-50%);">17</span>
<div style="left:1250px;top:500px;width:154px;height:19px;background:#4876ff;border:1px solid;border-color:#9fb8ff #2a47a0 #2a47a0 #9fb8ff;border-radius:9.5px;"></div>
<span class="t" style="left:1327.5px;top:500.8px;line-height:16px;transform:translateX(-50%);">RectButton</span>
<div style="left:1258px;top:445px;width:138px;height:20px;background:#d3d3d3;border:1px solid;border-color:#ffffff #666666 #666666 #ffffff;"></div>
<span class="t" style="left:1266.2px;top:447.3px;line-height:16px;">UseMe2Build 12&amp;13</span>
<div style="left:1406px;top:408px;width:157px;height:112px;background:#4876ff;border:1px solid #000;"></div>
<span class="t" style="left:1410.6px;top:415px;line-height:16px;">Ga</span>
<span class="t" style="left:1554px;top:411.3px;line-height:16px;transform:translateX(-50%);">18</span>
<div style="left:1407px;top:500px;width:154px;height:19px;background:#4876ff;border:1px solid;border-color:#9fb8ff #2a47a0 #2a47a0 #9fb8ff;border-radius:9.5px;"></div>
<span class="t" style="left:1484.5px;top:500.8px;line-height:16px;transform:translateX(-50%);">Gauge</span>
<div style="left:1434px;top:447px;width:100px;height:12px;background:#d3d3d3;border:1px solid;border-color:#666666 #ffffff #ffffff #666666;border-radius:6px;"></div>
<div style="left:1437px;top:450.5px;width:58px;height:4px;background:#000;border-radius:2px;"></div>
<svg style="left:1441.5px;top:459px;" width="90" height="5" viewBox="0 0 90 5"><rect x="0" y="0" width="1.6" height="5" fill="#d3d3d3"/><rect x="3.42" y="0" width="1.6" height="5" fill="#d3d3d3"/><rect x="6.84" y="0" width="1.6" height="5" fill="#d3d3d3"/><rect x="10.26" y="0" width="1.6" height="5" fill="#d3d3d3"/><rect x="13.68" y="0" width="1.6" height="5" fill="#d3d3d3"/><rect x="17.1" y="0" width="1.6" height="5" fill="#d3d3d3"/><rect x="20.52" y="0" width="1.6" height="5" fill="#d3d3d3"/><rect x="23.94" y="0" width="1.6" height="5" fill="#d3d3d3"/><rect x="27.36" y="0" width="1.6" height="5" fill="#d3d3d3"/><rect x="30.78" y="0" width="1.6" height="5" fill="#d3d3d3"/><rect x="34.2" y="0" width="1.6" height="5" fill="#d3d3d3"/><rect x="37.62" y="0" width="1.6" height="5" fill="#d3d3d3"/><rect x="41.04" y="0" width="1.6" height="5" fill="#d3d3d3"/><rect x="44.46" y="0" width="1.6" height="5" fill="#d3d3d3"/><rect x="47.88" y="0" width="1.6" height="5" fill="#d3d3d3"/><rect x="51.3" y="0" width="1.6" height="5" fill="#d3d3d3"/><rect x="54.72" y="0" width="1.6" height="5" fill="#d3d3d3"/><rect x="58.14" y="0" width="1.6" height="5" fill="#d3d3d3"/><rect x="61.56" y="0" width="1.6" height="5" fill="#d3d3d3"/><rect x="64.98" y="0" width="1.6" height="5" fill="#d3d3d3"/><rect x="68.4" y="0" width="1.6" height="5" fill="#d3d3d3"/><rect x="71.82" y="0" width="1.6" height="5" fill="#d3d3d3"/><rect x="75.24" y="0" width="1.6" height="5" fill="#d3d3d3"/><rect x="78.66" y="0" width="1.6" height="5" fill="#d3d3d3"/><rect x="82.08" y="0" width="1.6" height="5" fill="#d3d3d3"/><rect x="85.5" y="0" width="1.6" height="5" fill="#d3d3d3"/></svg>
<div style="left:464px;top:520px;width:157px;height:112px;background:#66cdaa;border:1px solid #000;"></div>
<span class="t" style="left:612px;top:523.3px;line-height:16px;transform:translateX(-50%);">19</span>
<div style="left:465px;top:612px;width:154px;height:19px;background:#66cdaa;border:1px solid;border-color:#a4f5d8 #3e8269 #3e8269 #a4f5d8;border-radius:9.5px;"></div>
<div style="left:621px;top:520px;width:157px;height:112px;background:#66cdaa;border:1px solid #000;"></div>
<span class="t" style="left:769px;top:523.3px;line-height:16px;transform:translateX(-50%);">20</span>
<div style="left:622px;top:612px;width:154px;height:19px;background:#66cdaa;border:1px solid;border-color:#a4f5d8 #3e8269 #3e8269 #a4f5d8;border-radius:9.5px;"></div>
<span class="t" style="left:699.5px;top:612.8px;line-height:16px;transform:translateX(-50%);">FlatExclusives</span>
<div style="left:655px;top:547px;width:43px;height:20px;background:#d3d3d3;border:1px solid;border-color:#ffffff #6a6a6a #6a6a6a #ffffff;"></div>
<div style="left:698px;top:547px;width:44px;height:20px;background:#4876ff;border:1px solid;border-color:#9fb8ff #2a47a0 #2a47a0 #9fb8ff;"></div>
<div style="left:655px;top:567px;width:43px;height:20px;background:#ee82ee;border:1px solid;border-color:#ffb4ff #9a529a #9a529a #ffb4ff;"></div>
<div style="left:698px;top:567px;width:44px;height:20px;background:#48d1cc;border:1px solid;border-color:#7ffffa #2c8784 #2c8784 #7ffffa;"></div>
<span class="t" style="left:692px;top:548.6px;line-height:16px;transform:translateX(-100%);">Gray</span>
<span class="t" style="left:705.5px;top:548.6px;line-height:16px;">Blue</span>
<span class="t" style="left:692px;top:568.6px;line-height:16px;transform:translateX(-100%);">Pink</span>
<span class="t" style="left:705.5px;top:568.6px;line-height:16px;">Aqua</span>
<div style="left:778px;top:520px;width:157px;height:112px;background:#66cdaa;border:1px solid #000;"></div>
<span class="t" style="left:782.6px;top:527px;line-height:16px;">Fc</span>
<span class="t" style="left:926px;top:523.3px;line-height:16px;transform:translateX(-50%);">21</span>
<div style="left:779px;top:612px;width:154px;height:19px;background:#66cdaa;border:1px solid;border-color:#a4f5d8 #3e8269 #3e8269 #a4f5d8;border-radius:9.5px;"></div>
<span class="t" style="left:856.5px;top:612.8px;line-height:16px;transform:translateX(-50%);">FlatCheckbox</span>
<span class="t" style="left:803.2px;top:547.1px;line-height:16px;letter-spacing:0.15px;">Owner Access:</span>
<div style="left:894px;top:549px;width:13px;height:13px;background:#d3d3d3;border:1px solid;border-color:#ffffff #666666 #666666 #ffffff;"></div>
<span class="t" style="left:803.2px;top:571.9px;line-height:16px;letter-spacing:0.15px;">Group Access:</span>
<div style="left:894px;top:574px;width:13px;height:13px;background:#d3d3d3;border:1px solid;border-color:#ffffff #666666 #666666 #ffffff;"></div>
<div style="left:935px;top:520px;width:157px;height:112px;background:#48d1cc;border:1px solid #000;"></div>
<span class="t" style="left:939.6px;top:527px;line-height:16px;">Da</span>
<span class="t" style="left:1083px;top:523.3px;line-height:16px;transform:translateX(-50%);">22</span>
<div style="left:936px;top:612px;width:154px;height:19px;background:#48d1cc;border:1px solid;border-color:#7ffffa #2c8784 #2c8784 #7ffffa;border-radius:9.5px;"></div>
<span class="t" style="left:1013.5px;top:612.8px;line-height:16px;transform:translateX(-50%);">DrawArea</span>
<div style="left:950px;top:558px;width:126px;height:19px;background:#48d1cc;border:1px solid;border-color:#7ffffa #2c8784 #2c8784 #7ffffa;border-radius:9.5px;"></div>
<span class="t" style="left:960.3px;top:558.9px;line-height:16px;">PopUp DrawArea..</span>
<div style="left:1092px;top:520px;width:157px;height:112px;background:#4876ff;border:1px solid #000;"></div>
<span class="t" style="left:1096.6px;top:527px;line-height:16px;">S</span>
<span class="t" style="left:1240px;top:523.3px;line-height:16px;transform:translateX(-50%);">23</span>
<div style="left:1093px;top:612px;width:154px;height:19px;background:#4876ff;border:1px solid;border-color:#9fb8ff #2a47a0 #2a47a0 #9fb8ff;border-radius:9.5px;"></div>
<span class="t" style="left:1170.5px;top:612.8px;line-height:16px;transform:translateX(-50%);">Stub</span>
<div style="left:1133px;top:530px;width:77px;height:77px;background:#d3d3d3;border:1px solid #000;"></div>
<div style="left:1139px;top:536px;width:64px;height:54px;border:1px solid #4876ff;"></div>
<span class="t" style="left:1173.5px;top:563.5px;text-align:center;-webkit-text-stroke:0.5px #4876ff;font-family:'DejaVu Serif','Liberation Serif',serif;font-style:italic;font-size:20px;line-height:19px;color:#4876ff;transform:translate(-50%,-50%) rotate(-29deg) scaleX(0.68);letter-spacing:0;">Drawable<br>Canvas</span>
<div style="left:1249px;top:520px;width:157px;height:112px;background:#4876ff;border:1px solid #000;"></div>
<span class="t" style="left:1253.6px;top:527px;line-height:16px;">Ob-G</span>
<span class="t" style="left:1397px;top:523.3px;line-height:16px;transform:translateX(-50%);">24</span>
<div style="left:1250px;top:612px;width:154px;height:19px;background:#4876ff;border:1px solid;border-color:#9fb8ff #2a47a0 #2a47a0 #9fb8ff;border-radius:9.5px;"></div>
<span class="t" style="left:1327.5px;top:612.8px;line-height:16px;transform:translateX(-50%);">OblongButton</span>
<div style="left:1287px;top:558px;width:80px;height:19px;background:#d3d3d3;border:1px solid;border-color:#ffffff #6a6a6a #6a6a6a #ffffff;border-radius:9.5px;"></div>
<span class="t" style="left:1297px;top:558.5px;line-height:16px;">Press Me...</span>
<div style="left:1406px;top:520px;width:157px;height:112px;background:#4876ff;border:1px solid #000;"></div>
<span class="t" style="left:1410.6px;top:527px;line-height:16px;">Sb</span>
<span class="t" style="left:1554px;top:523.3px;line-height:16px;transform:translateX(-50%);">25</span>
<div style="left:1407px;top:612px;width:154px;height:19px;background:#4876ff;border:1px solid;border-color:#9fb8ff #2a47a0 #2a47a0 #9fb8ff;border-radius:9.5px;"></div>
<span class="t" style="left:1484.5px;top:612.8px;line-height:16px;transform:translateX(-50%);">Scrollbar</span>
<div style="left:1429px;top:560px;width:6px;height:14px;background:#d3d3d3;border:1px solid;border-color:#ffffff #666666 #666666 #ffffff;"></div>
<div style="left:1437px;top:560px;width:46.5px;height:14px;background:#d3d3d3;border:1px solid;border-color:#ffffff #666666 #666666 #ffffff;"></div>
<div style="left:1451.5px;top:561px;width:1px;height:12px;background:#666666;"></div>
<div style="left:1452.5px;top:561px;width:1px;height:12px;background:#ffffff;"></div>
<div style="left:1467px;top:561px;width:1px;height:12px;background:#666666;"></div>
<div style="left:1468px;top:561px;width:1px;height:12px;background:#ffffff;"></div>
<svg style="left:1440px;top:563px;" width="8" height="8" viewBox="0 0 8 8"><path d="M6,0 L1,4.0 L6,8 Z" fill="#666666"/></svg>
<svg style="left:1472px;top:563px;" width="8" height="8" viewBox="0 0 8 8"><path d="M2,0 L7,4.0 L2,8 Z" fill="#666666"/></svg>
<div style="left:1483px;top:565px;width:17px;height:3px;background:#666666;"></div>
<div style="left:1500px;top:565px;width:31px;height:3px;background:#b0b0b0;"></div>
<div style="left:1533px;top:560px;width:6px;height:14px;background:#d3d3d3;border:1px solid;border-color:#ffffff #666666 #666666 #ffffff;"></div>
<div style="left:464px;top:632px;width:157px;height:112px;background:#4876ff;border:1px solid #000;"></div>
<span class="t" style="left:612px;top:635.3px;line-height:16px;transform:translateX(-50%);">26</span>
<div style="left:465px;top:724px;width:154px;height:19px;background:#4876ff;border:1px solid;border-color:#9fb8ff #2a47a0 #2a47a0 #9fb8ff;border-radius:9.5px;"></div>
<div style="left:621px;top:632px;width:157px;height:112px;background:#4876ff;border:1px solid #000;"></div>
<span class="t" style="left:769px;top:635.3px;line-height:16px;transform:translateX(-50%);">27</span>
<div style="left:622px;top:724px;width:154px;height:19px;background:#4876ff;border:1px solid;border-color:#9fb8ff #2a47a0 #2a47a0 #9fb8ff;border-radius:9.5px;"></div>
<span class="t" style="left:699.5px;top:724.8px;line-height:16px;transform:translateX(-50%);">StaticText</span>
<div style="left:640px;top:659px;width:119px;height:44px;background:#d3d3d3;border:1px solid #000;"></div>
<span class="t" style="left:757px;top:660.3px;line-height:16px;transform:translateX(-100%);letter-spacing:0.6px;">This cannot be edited.</span>
<span class="t" style="left:750.5px;top:673.1px;line-height:16px;transform:translateX(-100%);letter-spacing:0.6px;">So go ahead and</span>
<span class="t" style="left:753.3px;top:686.3px;line-height:16px;transform:translateX(-100%);letter-spacing:0.6px;">make my day!</span>
<div style="left:778px;top:632px;width:157px;height:112px;background:#4876ff;border:1px solid #000;"></div>
<span class="t" style="left:782.6px;top:639px;line-height:16px;">Dt</span>
<span class="t" style="left:926px;top:635.3px;line-height:16px;transform:translateX(-50%);">28</span>
<div style="left:779px;top:724px;width:154px;height:19px;background:#4876ff;border:1px solid;border-color:#9fb8ff #2a47a0 #2a47a0 #9fb8ff;border-radius:9.5px;"></div>
<span class="t" style="left:856.5px;top:724.8px;line-height:16px;transform:translateX(-50%);">DropTarget</span>
<span class="t" style="left:811.6px;top:648px;line-height:16px;letter-spacing:0.15px;">Drag From Me...</span>
<span class="t" style="left:856.5px;top:698.7px;line-height:16px;transform:translateX(-50%);">Drop On Me!</span>
<div style="left:843px;top:661px;width:26px;height:37px;border-style:solid;border-width:5px 5px 5px 5px;border-color:#707070 #ffffff #ffffff #707070;background:#c0c0c0;"></div>
<svg style="left:850.5px;top:671px;" width="11" height="18" viewBox="0 0 11 18"><rect x="0.5" y="0.5" width="10" height="1.1" fill="#000"/><rect x="0.5" y="2.4" width="10" height="1.1" fill="#000"/><rect x="0.5" y="4.3" width="10" height="1.1" fill="#000"/><rect x="0.5" y="6.199999999999999" width="10" height="1.1" fill="#000"/><rect x="0.5" y="8.1" width="10" height="1.1" fill="#000"/><rect x="0.5" y="10.0" width="10" height="1.1" fill="#000"/><rect x="0.5" y="11.899999999999999" width="10" height="1.1" fill="#000"/><rect x="0.5" y="13.799999999999999" width="10" height="1.1" fill="#000"/><rect x="0.5" y="15.7" width="10" height="1.1" fill="#000"/></svg>
<div style="left:943px;top:640px;width:15px;height:15px;background:#48d1cc;"></div>
<span class="t" style="left:963px;top:641.1px;line-height:16px;">Constraint Widgets</span>
<div style="left:943px;top:655px;width:15px;height:15px;background:#4876ff;"></div>
<span class="t" style="left:963px;top:656.1px;line-height:16px;">Primitive Widgets</span>
<div style="left:943px;top:670px;width:15px;height:15px;background:#ee82ee;"></div>
<span class="t" style="left:963px;top:671.1px;line-height:16px;">Shell Widgets</span>
<div style="left:943px;top:685px;width:15px;height:15px;background:#66cdaa;"></div>
<span class="t" style="left:963px;top:686.1px;line-height:16px;">Flat Widgets</span>
<span class="t" style="left:943px;top:700.6px;line-height:16px;">-G</span>
<span class="t" style="left:963px;top:700.6px;line-height:16px;">Available in Gadget</span>
<svg style="left:1142px;top:655px;" width="45" height="51" viewBox="0 0 45 51"><defs><pattern id="chk" width="2" height="2" patternUnits="userSpaceOnUse"><rect width="2" height="2" fill="#d3d3d3"/><rect width="1" height="1" fill="#000"/><rect x="1" y="1" width="1" height="1" fill="#000"/></pattern></defs>
<path d="M1,2.5 L6,5.5 L6,49 L1,44 Z" fill="url(#chk)"/><path d="M1,1.5 L39,1.5 M4,3.5 L42,3.5" stroke="#000"/><path d="M2,2.5 L40,2.5" stroke="#fff"/>
<rect x="6" y="5" width="37" height="44" fill="#000"/>
<path d="M7.5,9 L7.5,6.5 L10,6.5 M39,6.5 L41.5,6.5 L41.5,9 M7.5,45 L7.5,47.5 L10,47.5 M39,47.5 L41.5,47.5 L41.5,45" stroke="#fff" fill="none"/></svg>
<span class="t" style="left:1166px;top:661.14px;line-height:12px;font-size:10px;color:#fff;transform:translateX(-50%);letter-spacing:0;transform:translateX(-50%) scaleX(0.74);">Motif</span>
<span class="t" style="left:1166px;top:670.27px;line-height:6px;font-size:5px;color:#fff;transform:translateX(-50%);letter-spacing:0;transform:translateX(-50%) scaleX(0.9);">to</span>
<span class="t" style="left:1166px;top:675.14px;line-height:12px;font-size:10px;color:#fff;transform:translateX(-50%);letter-spacing:0;transform:translateX(-50%) scaleX(0.63);">OPEN LOOK</span>
<span class="t" style="left:1166px;top:683.74px;line-height:12px;font-size:10px;color:#fff;transform:translateX(-50%);letter-spacing:0;transform:translateX(-50%) scaleX(0.8);">+ =</span>
<span class="t" style="left:1166px;top:691.34px;line-height:12px;font-size:10px;color:#fff;transform:translateX(-50%);letter-spacing:0;transform:translateX(-50%) scaleX(0.76);">Formulas</span>
<div style="left:1249px;top:632px;width:157px;height:112px;background:#4876ff;border:1px solid #000;"></div>
<span class="t" style="left:1253.6px;top:639px;line-height:16px;">Ab-G</span>
<span class="t" style="left:1397px;top:635.3px;line-height:16px;transform:translateX(-50%);">29</span>
<div style="left:1250px;top:724px;width:154px;height:19px;background:#4876ff;border:1px solid;border-color:#9fb8ff #2a47a0 #2a47a0 #9fb8ff;border-radius:9.5px;"></div>
<span class="t" style="left:1327.5px;top:724.8px;line-height:16px;transform:translateX(-50%);">AbbrevMenuButton</span>
<div style="left:1272px;top:673px;width:15px;height:14px;background:#d3d3d3;border:1px solid;border-color:#ffffff #666666 #666666 #ffffff;"></div>
<svg style="left:1275.5px;top:677px;" width="9" height="7" viewBox="0 0 9 7"><path d="M0.5,0.5 L4.0,6 L7.5,0.5 Z" fill="none" stroke="none"/><path d="M0,0.5 L8,0.5" stroke="#666666"/><path d="M0.5,0.5 L4.0,6" stroke="#666666" fill="none"/><path d="M7.5,1 L4.3,6" stroke="#ffffff" fill="none"/></svg>
<span class="t" style="left:1294.3px;top:674.3px;line-height:16px;">Sparcstation1+</span>
<div style="left:1406px;top:632px;width:157px;height:112px;background:#48d1cc;border:1px solid #000;"></div>
<span class="t" style="left:1410.6px;top:639px;line-height:16px;">Fp</span>
<span class="t" style="left:1554px;top:635.3px;line-height:16px;transform:translateX(-50%);">30</span>
<div style="left:1407px;top:724px;width:154px;height:19px;background:#48d1cc;border:1px solid;border-color:#7ffffa #2c8784 #2c8784 #7ffffa;border-radius:9.5px;"></div>
<span class="t" style="left:1484.5px;top:724.8px;line-height:16px;transform:translateX(-50%);">FooterPanel</span>
<div style="left:1434px;top:649px;width:100px;height:43px;background:#d3d3d3;border:1px solid #000;"></div>
<div style="left:1434px;top:690px;width:100px;height:20px;background:#d3d3d3;border:1px solid #000;border-top-width:2px;"></div>
<span class="t" style="left:1437.5px;top:693.3px;line-height:16px;letter-spacing:0px;">error: messages</span>
<div style="left:464px;top:744px;width:157px;height:112px;background:#48d1cc;border:1px solid #000;"></div>
<span class="t" style="left:612px;top:747.3px;line-height:16px;transform:translateX(-50%);">31</span>
<div style="left:465px;top:836px;width:154px;height:19px;background:#48d1cc;border:1px solid;border-color:#7ffffa #2c8784 #2c8784 #7ffffa;border-radius:9.5px;"></div>
<div style="left:621px;top:744px;width:157px;height:112px;background:#48d1cc;border:1px solid #000;"></div>
<span class="t" style="left:769px;top:747.3px;line-height:16px;transform:translateX(-50%);">32</span>
<div style="left:622px;top:836px;width:154px;height:19px;background:#48d1cc;border:1px solid;border-color:#7ffffa #2c8784 #2c8784 #7ffffa;border-radius:9.5px;"></div>
<span class="t" style="left:699.5px;top:836.8px;line-height:16px;transform:translateX(-50%);">FileChooser</span>
<div style="left:640px;top:782px;width:109px;height:19px;background:#48d1cc;border:1px solid;border-color:#7ffffa #2c8784 #2c8784 #7ffffa;border-radius:9.5px;"></div>
<span class="t" style="left:727.5px;top:782.9px;line-height:16px;transform:translateX(-100%);">FileChooser</span>
<svg style="left:734.5px;top:788px;" width="9" height="8" viewBox="0 0 9 8"><path d="M0.5,0.5 L4.0,7 L7.5,0.5 Z" fill="none" stroke="none"/><path d="M0,0.5 L8,0.5" stroke="#2c8784"/><path d="M0.5,0.5 L4.0,7" stroke="#2c8784" fill="none"/><path d="M7.5,1 L4.3,7" stroke="#aaffff" fill="none"/></svg>
<div style="left:1249px;top:744px;width:157px;height:112px;background:#4876ff;border:1px solid #000;"></div>
<span class="t" style="left:1253.6px;top:751px;line-height:16px;">Tl</span>
<span class="t" style="left:1397px;top:747.3px;line-height:16px;transform:translateX(-50%);">33</span>
<div style="left:1250px;top:836px;width:154px;height:19px;background:#4876ff;border:1px solid;border-color:#9fb8ff #2a47a0 #2a47a0 #9fb8ff;border-radius:9.5px;"></div>
<span class="t" style="left:1327.5px;top:836.8px;line-height:16px;transform:translateX(-50%);">TextLine</span>
<div style="left:1250px;top:784px;width:156px;height:17px;background:#d3d3d3;border:1px solid #000;"></div>
<span class="t" style="left:1252.5px;top:785.1px;line-height:16px;font-weight:bold;letter-spacing:0.25px;">TextLine:</span>
<span class="t" style="left:1330px;top:784.1px;line-height:16px;">any text...</span>
<div style="left:1322px;top:798px;width:83px;height:1px;background:#666666;"></div>
<div style="left:1406px;top:744px;width:157px;height:112px;background:#4876ff;border:1px solid #000;"></div>
<span class="t" style="left:1410.6px;top:751px;line-height:16px;">Nf</span>
<span class="t" style="left:1554px;top:747.3px;line-height:16px;transform:translateX(-50%);">34</span>
<div style="left:1407px;top:836px;width:154px;height:19px;background:#4876ff;border:1px solid;border-color:#9fb8ff #2a47a0 #2a47a0 #9fb8ff;border-radius:9.5px;"></div>
<span class="t" style="left:1484.5px;top:836.8px;line-height:16px;transform:translateX(-50%);">NumericField</span>
<div style="left:1416px;top:784px;width:138px;height:17px;background:#d3d3d3;border:1px solid #000;"></div>
<span class="t" style="left:1418.4px;top:785.1px;line-height:16px;font-weight:bold;letter-spacing:-0.4px;">Data:</span>
<span class="t" style="left:1459.6px;top:784.1px;line-height:16px;">12345</span>
<div style="left:1459px;top:798px;width:56px;height:1px;background:#666666;"></div>
<div style="left:1523px;top:786px;width:15px;height:14px;background:#d3d3d3;border:1px solid;border-color:#ffffff #666666 #666666 #ffffff;"></div>
<div style="left:1538px;top:786px;width:15px;height:14px;background:#d3d3d3;border:1px solid;border-color:#ffffff #666666 #666666 #ffffff;"></div>
<svg style="left:1526px;top:789px;" width="9" height="8" viewBox="0 0 9 8"><path d="M0.5,7 L4.5,0.5 L8.5,7 Z" fill="none" stroke="#aaa"/></svg>
<svg style="left:1541px;top:789px;" width="9" height="8" viewBox="0 0 9 8"><path d="M0.5,0.5 L8.5,0.5 L4.5,7 Z" fill="none" stroke="#666666"/></svg>
<div style="left:15px;top:278px;width:671px;height:678px;background:#cccccc;border-style:solid;border-width:2px;border-color:#ffffff #666666 #666666 #ffffff;"></div>
<svg style="left:15px;top:278px;" width="11" height="11" viewBox="0 0 11 11"><line x1="10.5" y1="0" x2="10.5" y2="5" stroke="#666666"/><line x1="11" y1="4.5" x2="5" y2="4.5" stroke="#666666"/><line x1="4.5" y1="5" x2="4.5" y2="11" stroke="#666666"/><line x1="5" y1="10.5" x2="0" y2="10.5" stroke="#666666"/></svg>
<svg style="left:675px;top:278px;" width="11" height="11" viewBox="0 0 11 11"><line x1="0.5" y1="0" x2="0.5" y2="5" stroke="#ffffff"/><line x1="0" y1="4.5" x2="6" y2="4.5" stroke="#666666"/><line x1="6.5" y1="5" x2="6.5" y2="11" stroke="#ffffff"/><line x1="6" y1="10.5" x2="11" y2="10.5" stroke="#666666"/></svg>
<svg style="left:15px;top:945px;" width="11" height="11" viewBox="0 0 11 11"><line x1="10.5" y1="11" x2="10.5" y2="6" stroke="#666666"/><line x1="11" y1="6.5" x2="5" y2="6.5" stroke="#ffffff"/><line x1="4.5" y1="6" x2="4.5" y2="0" stroke="#666666"/><line x1="5" y1="0.5" x2="0" y2="0.5" stroke="#ffffff"/></svg>
<svg style="left:675px;top:945px;" width="11" height="11" viewBox="0 0 11 11"><line x1="0.5" y1="11" x2="0.5" y2="6" stroke="#ffffff"/><line x1="0" y1="6.5" x2="6" y2="6.5" stroke="#ffffff"/><line x1="6.5" y1="6" x2="6.5" y2="0" stroke="#ffffff"/><line x1="6" y1="0.5" x2="11" y2="0.5" stroke="#ffffff"/></svg>
<div style="left:29px;top:283px;width:16px;height:15px;background:#cccccc;border:1px solid;border-color:#ffffff #666666 #666666 #ffffff;"></div>
<svg style="left:33px;top:287px;" width="9" height="8" viewBox="0 0 9 8"><path d="M0.8,0.8 L7.4,0.8 L4,6.6 Z" fill="#bdbdbd"/><path d="M0,0.5 L7.5,0.5" stroke="#666666"/><path d="M0.5,0.5 L3.6,6.6" stroke="#666666" fill="none"/><path d="M7,1 L4.2,6.8" stroke="#ffffff" fill="none"/></svg>
<span class="t" style="left:365px;top:282.3px;line-height:16px;font-weight:bold;letter-spacing:0.2px;transform:translateX(-50%);">File Manager v1.0.5.0: /export/home/raistlin</span>
<div style="left:20px;top:303px;width:660px;height:1px;background:#666666;"></div>
<div style="left:20px;top:304px;width:660px;height:1px;background:#ffffff;"></div>
<div style="left:679px;top:303px;width:1px;height:1px;background:#ffffff;"></div>
<div style="left:24px;top:307px;width:54px;height:19px;background:#cccccc;border:1px solid;border-color:#ffffff #666666 #666666 #ffffff;border-radius:9.5px;"></div>
<span class="t" style="left:34.4px;top:307.9px;line-height:16px;">File</span>
<svg style="left:62px;top:313px;" width="8" height="7" viewBox="0 0 8 7"><path d="M0.5,0.5 L3.5,6 L6.5,0.5 Z" fill="#bbbbbb" stroke="none"/><path d="M0,0.5 L7,0.5" stroke="#666666"/><path d="M0.5,0.5 L3.5,6" stroke="#666666" fill="none"/><path d="M6.5,1 L3.8,6" stroke="#ffffff" fill="none"/></svg>
<div style="left:88px;top:307px;width:61px;height:19px;background:#cccccc;border:1px solid;border-color:#ffffff #666666 #666666 #ffffff;border-radius:9.5px;"></div>
<span class="t" style="left:97.6px;top:307.9px;line-height:16px;">View</span>
<svg style="left:133px;top:313px;" width="8" height="7" viewBox="0 0 8 7"><path d="M0.5,0.5 L3.5,6 L6.5,0.5 Z" fill="#bbbbbb" stroke="none"/><path d="M0,0.5 L7,0.5" stroke="#666666"/><path d="M0.5,0.5 L3.5,6" stroke="#666666" fill="none"/><path d="M6.5,1 L3.8,6" stroke="#ffffff" fill="none"/></svg>
<div style="left:160px;top:307px;width:55px;height:19px;background:#cccccc;border:1px solid;border-color:#ffffff #666666 #666666 #ffffff;border-radius:9.5px;"></div>
<span class="t" style="left:168.8px;top:307.9px;line-height:16px;">Edit</span>
<svg style="left:199px;top:313px;" width="8" height="7" viewBox="0 0 8 7"><path d="M0.5,0.5 L3.5,6 L6.5,0.5 Z" fill="#bbbbbb" stroke="none"/><path d="M0,0.5 L7,0.5" stroke="#666666"/><path d="M0.5,0.5 L3.5,6" stroke="#666666" fill="none"/><path d="M6.5,1 L3.8,6" stroke="#ffffff" fill="none"/></svg>
<div style="left:226px;top:307px;width:69px;height:19px;background:#cccccc;border:1px solid;border-color:#ffffff #666666 #666666 #ffffff;border-radius:9.5px;"></div>
<span class="t" style="left:235.4px;top:307.9px;line-height:16px;">Go To:</span>
<svg style="left:279px;top:313px;" width="8" height="7" viewBox="0 0 8 7"><path d="M0.5,0.5 L3.5,6 L6.5,0.5 Z" fill="#bbbbbb" stroke="none"/><path d="M0,0.5 L7,0.5" stroke="#666666"/><path d="M0.5,0.5 L3.5,6" stroke="#666666" fill="none"/><path d="M6.5,1 L3.8,6" stroke="#ffffff" fill="none"/></svg>
<svg style="left:303px;top:315px;" width="8" height="8" viewBox="0 0 8 8"><path d="M4,0.5 L7.5,4 L4,7.5 L0.5,4 Z" fill="#aaa" stroke="#555" stroke-width="0.8"/></svg>
<div style="left:310px;top:320px;width:356px;height:1px;background:#666666;"></div>
<div style="left:310px;top:321px;width:356px;height:1px;background:#ffffff;"></div>
<div style="left:665px;top:320px;width:1px;height:1px;background:#ffffff;"></div>
<div style="left:20px;top:328px;width:661px;height:54px;background:#fff;border:1px solid #000;"></div>
<div style="left:60px;top:348px;width:13px;height:1px;background:#000;"></div>
<div style="left:104px;top:348px;width:14px;height:1px;background:#000;"></div>
<div style="left:149px;top:348px;width:15px;height:1px;background:#000;"></div>
<svg style="left:29px;top:336px;" width="33" height="26" viewBox="0 0 33 26"><path d="M0.5,5.5 Q0.5,3.5 2.5,3.5 L8.5,3.5 L10.5,0.5 L19.5,0.5 L21.5,3.5 L28.5,3.5 Q30.5,3.5 30.5,5.5 L30.5,23.5 L0.5,23.5 Z" fill="#e6e6b8" stroke="#000"/>
<path d="M1,5.5 L8.5,5.5 L10.5,7.5 L19.5,7.5 L21.5,5.5 L30,5.5" fill="none" stroke="#000"/><path d="M8.5,3.5 L10.5,5.5 M21.5,3.5 L19.5,5.5" stroke="#000" fill="none"/>
<path d="M31.5,5 L31.5,25 M1,24.5 L32,24.5" stroke="#000" fill="none"/></svg>
<svg style="left:72px;top:336px;" width="33" height="26" viewBox="0 0 33 26"><path d="M0.5,5.5 Q0.5,3.5 2.5,3.5 L8.5,3.5 L10.5,0.5 L19.5,0.5 L21.5,3.5 L28.5,3.5 Q30.5,3.5 30.5,5.5 L30.5,23.5 L0.5,23.5 Z" fill="#e6e6b8" stroke="#000"/>
<path d="M1,5.5 L8.5,5.5 L10.5,7.5 L19.5,7.5 L21.5,5.5 L30,5.5" fill="none" stroke="#000"/><path d="M8.5,3.5 L10.5,5.5 M21.5,3.5 L19.5,5.5" stroke="#000" fill="none"/>
<path d="M31.5,5 L31.5,25 M1,24.5 L32,24.5" stroke="#000" fill="none"/></svg>
<svg style="left:117px;top:336px;" width="33" height="26" viewBox="0 0 33 26"><path d="M0.5,5.5 Q0.5,3.5 2.5,3.5 L8.5,3.5 L10.5,0.5 L19.5,0.5 L21.5,3.5 L28.5,3.5 Q30.5,3.5 30.5,5.5 L30.5,23.5 L0.5,23.5 Z" fill="#e6e6b8" stroke="#000"/>
<path d="M1,5.5 L8.5,5.5 L10.5,7.5 L19.5,7.5 L21.5,5.5 L30,5.5" fill="none" stroke="#000"/><path d="M8.5,3.5 L10.5,5.5 M21.5,3.5 L19.5,5.5" stroke="#000" fill="none"/>
<path d="M31.5,5 L31.5,25 M1,24.5 L32,24.5" stroke="#000" fill="none"/></svg>
<svg style="left:161px;top:336px;" width="34" height="26" viewBox="0 0 34 26"><path d="M2.5,23.5 L2.5,5.5 Q2.5,3.5 4.5,3.5 L9.5,3.5 L11.5,0.5 L19.5,0.5 L21.5,3.5 L27.5,3.5 Q29.5,3.5 29.5,5.5 L29.5,8.5" fill="#e6e6b8" stroke="#000"/>
<path d="M2.5,23.5 Q3.5,9.5 8.5,8.5 L32.5,8.5 Q29,12 27.5,23.5 Z" fill="#e6e6b8" stroke="#000"/>
<path d="M3,24.5 L28.5,24.5 M28.5,23 Q29.8,13 33,9" stroke="#000" fill="none"/></svg>
<span class="t" style="left:45.8px;top:362.8px;line-height:16px;transform:translateX(-50%);">/</span>
<span class="t" style="left:89px;top:362.8px;line-height:16px;transform:translateX(-50%);">export</span>
<span class="t" style="left:133.4px;top:362.8px;line-height:16px;transform:translateX(-50%);">home</span>
<span class="t" style="left:179.6px;top:362.8px;line-height:16px;transform:translateX(-50%);">raistlin</span>
<div style="left:20px;top:384px;width:6px;height:14px;background:#cccccc;border:1px solid;border-color:#ffffff #666666 #666666 #ffffff;"></div>
<svg style="left:28px;top:384px;" width="47" height="15" viewBox="0 0 47 15"><rect x="0.5" y="0.5" width="45" height="13" fill="none" stroke="#ffffff" stroke-dasharray="1 1"/><path d="M0.5,13.5 L45.5,13.5 L45.5,0.5" fill="none" stroke="#666666" stroke-dasharray="1 1"/>
<path d="M15.5,1 L15.5,13" stroke="#ffffff" stroke-dasharray="1 1"/><path d="M30.5,1 L30.5,13" stroke="#666666" stroke-dasharray="1 1"/>
<g fill="none" stroke="#888" stroke-dasharray="1 1"><path d="M10.5,3 L5.5,7 L10.5,11 M10.5,5.5 L8,7 L10.5,9"/><path d="M35.5,3 L40.5,7 L35.5,11 M35.5,5.5 L38,7 L35.5,9"/></g></svg>
<div style="left:76px;top:390px;width:598px;height:3px;background:#666666;"></div>
<div style="left:676px;top:384px;width:5px;height:14px;background:#cccccc;border:1px solid;border-color:#ffffff #666666 #666666 #ffffff;"></div>
<span class="t" style="left:42.5px;top:407.6px;line-height:16px;">Contains 54 items</span>
<span class="t" style="left:660.6px;top:407.6px;line-height:16px;transform:translateX(-100%);">7352 Mbytes (94%) available</span>
<div style="left:20px;top:426px;width:642px;height:487px;background:#fff;border:1px solid #000;overflow:hidden;">
<svg style="left:119px;top:14px;" width="33" height="26" viewBox="0 0 33 26"><path d="M0.5,5.5 Q0.5,3.5 2.5,3.5 L8.5,3.5 L10.5,0.5 L19.5,0.5 L21.5,3.5 L28.5,3.5 Q30.5,3.5 30.5,5.5 L30.5,23.5 L0.5,23.5 Z" fill="#e6e6b8" stroke="#000"/>
<path d="M1,5.5 L8.5,5.5 L10.5,7.5 L19.5,7.5 L21.5,5.5 L30,5.5" fill="none" stroke="#000"/><path d="M8.5,3.5 L10.5,5.5 M21.5,3.5 L19.5,5.5" stroke="#000" fill="none"/>
<path d="M31.5,5 L31.5,25 M1,24.5 L32,24.5" stroke="#000" fill="none"/></svg>
<span class="t" style="left:135.3px;top:42.7px;line-height:16px;transform:translateX(-50%);">.ansible</span>
<svg style="left:307px;top:10px;" width="26" height="33" viewBox="0 0 26 33"><path d="M0.5,0.5 L17.5,0.5 L23.5,6.5 L23.5,30.5 L0.5,30.5 Z" fill="#c299b8" stroke="#000"/><path d="M17.5,0.5 L17.5,6.5 L23.5,6.5" fill="none" stroke="#000"/>
<path d="M24.5,7 L24.5,32 M1,31.5 L25,31.5" stroke="#000" fill="none"/><path d="M25.2,8 L25.2,32" stroke="#000" stroke-width="0.6" fill="none"/></svg>
<span class="t" style="left:319.3px;top:42.7px;line-height:16px;transform:translateX(-50%);">.bash_history</span>
<svg style="left:491px;top:10px;" width="26" height="33" viewBox="0 0 26 33"><path d="M0.5,0.5 L17.5,0.5 L23.5,6.5 L23.5,30.5 L0.5,30.5 Z" fill="#c299b8" stroke="#000"/><path d="M17.5,0.5 L17.5,6.5 L23.5,6.5" fill="none" stroke="#000"/>
<path d="M24.5,7 L24.5,32 M1,31.5 L25,31.5" stroke="#000" fill="none"/><path d="M25.2,8 L25.2,32" stroke="#000" stroke-width="0.6" fill="none"/></svg>
<span class="t" style="left:503.3px;top:42.7px;line-height:16px;transform:translateX(-50%);">.bash_logout</span>
<svg style="left:123px;top:66px;" width="26" height="33" viewBox="0 0 26 33"><path d="M0.5,0.5 L17.5,0.5 L23.5,6.5 L23.5,30.5 L0.5,30.5 Z" fill="#c299b8" stroke="#000"/><path d="M17.5,0.5 L17.5,6.5 L23.5,6.5" fill="none" stroke="#000"/>
<path d="M24.5,7 L24.5,32 M1,31.5 L25,31.5" stroke="#000" fill="none"/><path d="M25.2,8 L25.2,32" stroke="#000" stroke-width="0.6" fill="none"/></svg>
<span class="t" style="left:135.3px;top:98.7px;line-height:16px;transform:translateX(-50%);">.bash_profile</span>
<svg style="left:307px;top:66px;" width="26" height="33" viewBox="0 0 26 33"><path d="M0.5,0.5 L17.5,0.5 L23.5,6.5 L23.5,30.5 L0.5,30.5 Z" fill="#c299b8" stroke="#000"/><path d="M17.5,0.5 L17.5,6.5 L23.5,6.5" fill="none" stroke="#000"/>
<path d="M24.5,7 L24.5,32 M1,31.5 L25,31.5" stroke="#000" fill="none"/><path d="M25.2,8 L25.2,32" stroke="#000" stroke-width="0.6" fill="none"/></svg>
<span class="t" style="left:319.3px;top:98.7px;line-height:16px;transform:translateX(-50%);">.bashrc</span>
<svg style="left:487px;top:70px;" width="33" height="26" viewBox="0 0 33 26"><path d="M0.5,5.5 Q0.5,3.5 2.5,3.5 L8.5,3.5 L10.5,0.5 L19.5,0.5 L21.5,3.5 L28.5,3.5 Q30.5,3.5 30.5,5.5 L30.5,23.5 L0.5,23.5 Z" fill="#e6e6b8" stroke="#000"/>
<path d="M1,5.5 L8.5,5.5 L10.5,7.5 L19.5,7.5 L21.5,5.5 L30,5.5" fill="none" stroke="#000"/><path d="M8.5,3.5 L10.5,5.5 M21.5,3.5 L19.5,5.5" stroke="#000" fill="none"/>
<path d="M31.5,5 L31.5,25 M1,24.5 L32,24.5" stroke="#000" fill="none"/></svg>
<span class="t" style="left:503.3px;top:98.7px;line-height:16px;transform:translateX(-50%);">.cache</span>
<svg style="left:119px;top:126px;" width="33" height="26" viewBox="0 0 33 26"><path d="M0.5,5.5 Q0.5,3.5 2.5,3.5 L8.5,3.5 L10.5,0.5 L19.5,0.5 L21.5,3.5 L28.5,3.5 Q30.5,3.5 30.5,5.5 L30.5,23.5 L0.5,23.5 Z" fill="#e6e6b8" stroke="#000"/>
<path d="M1,5.5 L8.5,5.5 L10.5,7.5 L19.5,7.5 L21.5,5.5 L30,5.5" fill="none" stroke="#000"/><path d="M8.5,3.5 L10.5,5.5 M21.5,3.5 L19.5,5.5" stroke="#000" fill="none"/>
<path d="M31.5,5 L31.5,25 M1,24.5 L32,24.5" stroke="#000" fill="none"/></svg>
<span class="t" style="left:135.3px;top:154.7px;line-height:16px;transform:translateX(-50%);">.config</span>
<svg style="left:303px;top:126px;" width="33" height="26" viewBox="0 0 33 26"><path d="M0.5,5.5 Q0.5,3.5 2.5,3.5 L8.5,3.5 L10.5,0.5 L19.5,0.5 L21.5,3.5 L28.5,3.5 Q30.5,3.5 30.5,5.5 L30.5,23.5 L0.5,23.5 Z" fill="#e6e6b8" stroke="#000"/>
<path d="M1,5.5 L8.5,5.5 L10.5,7.5 L19.5,7.5 L21.5,5.5 L30,5.5" fill="none" stroke="#000"/><path d="M8.5,3.5 L10.5,5.5 M21.5,3.5 L19.5,5.5" stroke="#000" fill="none"/>
<path d="M31.5,5 L31.5,25 M1,24.5 L32,24.5" stroke="#000" fill="none"/></svg>
<span class="t" style="left:319.3px;top:154.7px;line-height:16px;transform:translateX(-50%);">.dbus</span>
<svg style="left:491px;top:122px;" width="26" height="33" viewBox="0 0 26 33"><path d="M0.5,0.5 L17.5,0.5 L23.5,6.5 L23.5,30.5 L0.5,30.5 Z" fill="#c299b8" stroke="#000"/><path d="M17.5,0.5 L17.5,6.5 L23.5,6.5" fill="none" stroke="#000"/>
<path d="M24.5,7 L24.5,32 M1,31.5 L25,31.5" stroke="#000" fill="none"/><path d="M25.2,8 L25.2,32" stroke="#000" stroke-width="0.6" fill="none"/></svg>
<span class="t" style="left:503.3px;top:154.7px;line-height:16px;transform:translateX(-50%);">.desksetdefaults</span>
<svg style="left:119px;top:182px;" width="33" height="26" viewBox="0 0 33 26"><path d="M0.5,5.5 Q0.5,3.5 2.5,3.5 L8.5,3.5 L10.5,0.5 L19.5,0.5 L21.5,3.5 L28.5,3.5 Q30.5,3.5 30.5,5.5 L30.5,23.5 L0.5,23.5 Z" fill="#e6e6b8" stroke="#000"/>
<path d="M1,5.5 L8.5,5.5 L10.5,7.5 L19.5,7.5 L21.5,5.5 L30,5.5" fill="none" stroke="#000"/><path d="M8.5,3.5 L10.5,5.5 M21.5,3.5 L19.5,5.5" stroke="#000" fill="none"/>
<path d="M31.5,5 L31.5,25 M1,24.5 L32,24.5" stroke="#000" fill="none"/></svg>
<span class="t" style="left:135.3px;top:210.7px;line-height:16px;transform:translateX(-50%);">.docker</span>
<svg style="left:307px;top:178px;" width="26" height="33" viewBox="0 0 26 33"><path d="M0.5,0.5 L17.5,0.5 L23.5,6.5 L23.5,30.5 L0.5,30.5 Z" fill="#c299b8" stroke="#000"/><path d="M17.5,0.5 L17.5,6.5 L23.5,6.5" fill="none" stroke="#000"/>
<path d="M24.5,7 L24.5,32 M1,31.5 L25,31.5" stroke="#000" fill="none"/><path d="M25.2,8 L25.2,32" stroke="#000" stroke-width="0.6" fill="none"/></svg>
<span class="t" style="left:319.3px;top:210.7px;line-height:16px;transform:translateX(-50%);">.esd_auth</span>
<svg style="left:487px;top:182px;" width="33" height="26" viewBox="0 0 33 26"><path d="M0.5,5.5 Q0.5,3.5 2.5,3.5 L8.5,3.5 L10.5,0.5 L19.5,0.5 L21.5,3.5 L28.5,3.5 Q30.5,3.5 30.5,5.5 L30.5,23.5 L0.5,23.5 Z" fill="#e6e6b8" stroke="#000"/>
<path d="M1,5.5 L8.5,5.5 L10.5,7.5 L19.5,7.5 L21.5,5.5 L30,5.5" fill="none" stroke="#000"/><path d="M8.5,3.5 L10.5,5.5 M21.5,3.5 L19.5,5.5" stroke="#000" fill="none"/>
<path d="M31.5,5 L31.5,25 M1,24.5 L32,24.5" stroke="#000" fill="none"/></svg>
<span class="t" style="left:503.3px;top:210.7px;line-height:16px;transform:translateX(-50%);">.fm</span>
<svg style="left:119px;top:238px;" width="33" height="26" viewBox="0 0 33 26"><path d="M0.5,5.5 Q0.5,3.5 2.5,3.5 L8.5,3.5 L10.5,0.5 L19.5,0.5 L21.5,3.5 L28.5,3.5 Q30.5,3.5 30.5,5.5 L30.5,23.5 L0.5,23.5 Z" fill="#e6e6b8" stroke="#000"/>
<path d="M1,5.5 L8.5,5.5 L10.5,7.5 L19.5,7.5 L21.5,5.5 L30,5.5" fill="none" stroke="#000"/><path d="M8.5,3.5 L10.5,5.5 M21.5,3.5 L19.5,5.5" stroke="#000" fill="none"/>
<path d="M31.5,5 L31.5,25 M1,24.5 L32,24.5" stroke="#000" fill="none"/></svg>
<span class="t" style="left:135.3px;top:266.7px;line-height:16px;transform:translateX(-50%);">.gnupg</span>
<svg style="left:303px;top:238px;" width="33" height="26" viewBox="0 0 33 26"><path d="M0.5,5.5 Q0.5,3.5 2.5,3.5 L8.5,3.5 L10.5,0.5 L19.5,0.5 L21.5,3.5 L28.5,3.5 Q30.5,3.5 30.5,5.5 L30.5,23.5 L0.5,23.5 Z" fill="#e6e6b8" stroke="#000"/>
<path d="M1,5.5 L8.5,5.5 L10.5,7.5 L19.5,7.5 L21.5,5.5 L30,5.5" fill="none" stroke="#000"/><path d="M8.5,3.5 L10.5,5.5 M21.5,3.5 L19.5,5.5" stroke="#000" fill="none"/>
<path d="M31.5,5 L31.5,25 M1,24.5 L32,24.5" stroke="#000" fill="none"/></svg>
<span class="t" style="left:319.3px;top:266.7px;line-height:16px;transform:translateX(-50%);">.hplip</span>
<svg style="left:491px;top:234px;" width="26" height="33" viewBox="0 0 26 33"><path d="M0.5,0.5 L17.5,0.5 L23.5,6.5 L23.5,30.5 L0.5,30.5 Z" fill="#c299b8" stroke="#000"/><path d="M17.5,0.5 L17.5,6.5 L23.5,6.5" fill="none" stroke="#000"/>
<path d="M24.5,7 L24.5,32 M1,31.5 L25,31.5" stroke="#000" fill="none"/><path d="M25.2,8 L25.2,32" stroke="#000" stroke-width="0.6" fill="none"/></svg>
<span class="t" style="left:503.3px;top:266.7px;line-height:16px;transform:translateX(-50%);">.ICEauthority</span>
<svg style="left:119px;top:294px;" width="33" height="26" viewBox="0 0 33 26"><path d="M0.5,5.5 Q0.5,3.5 2.5,3.5 L8.5,3.5 L10.5,0.5 L19.5,0.5 L21.5,3.5 L28.5,3.5 Q30.5,3.5 30.5,5.5 L30.5,23.5 L0.5,23.5 Z" fill="#e6e6b8" stroke="#000"/>
<path d="M1,5.5 L8.5,5.5 L10.5,7.5 L19.5,7.5 L21.5,5.5 L30,5.5" fill="none" stroke="#000"/><path d="M8.5,3.5 L10.5,5.5 M21.5,3.5 L19.5,5.5" stroke="#000" fill="none"/>
<path d="M31.5,5 L31.5,25 M1,24.5 L32,24.5" stroke="#000" fill="none"/></svg>
<span class="t" style="left:135.3px;top:322.7px;line-height:16px;transform:translateX(-50%);">.java</span>
<svg style="left:303px;top:294px;" width="33" height="26" viewBox="0 0 33 26"><path d="M0.5,5.5 Q0.5,3.5 2.5,3.5 L8.5,3.5 L10.5,0.5 L19.5,0.5 L21.5,3.5 L28.5,3.5 Q30.5,3.5 30.5,5.5 L30.5,23.5 L0.5,23.5 Z" fill="#e6e6b8" stroke="#000"/>
<path d="M1,5.5 L8.5,5.5 L10.5,7.5 L19.5,7.5 L21.5,5.5 L30,5.5" fill="none" stroke="#000"/><path d="M8.5,3.5 L10.5,5.5 M21.5,3.5 L19.5,5.5" stroke="#000" fill="none"/>
<path d="M31.5,5 L31.5,25 M1,24.5 L32,24.5" stroke="#000" fill="none"/></svg>
<span class="t" style="left:319.3px;top:322.7px;line-height:16px;transform:translateX(-50%);">.keychain</span>
<svg style="left:491px;top:290px;" width="26" height="33" viewBox="0 0 26 33"><path d="M0.5,0.5 L17.5,0.5 L23.5,6.5 L23.5,30.5 L0.5,30.5 Z" fill="#c299b8" stroke="#000"/><path d="M17.5,0.5 L17.5,6.5 L23.5,6.5" fill="none" stroke="#000"/>
<path d="M24.5,7 L24.5,32 M1,31.5 L25,31.5" stroke="#000" fill="none"/><path d="M25.2,8 L25.2,32" stroke="#000" stroke-width="0.6" fill="none"/></svg>
<span class="t" style="left:503.3px;top:322.7px;line-height:16px;transform:translateX(-50%);">.lesshst</span>
<svg style="left:119px;top:350px;" width="33" height="26" viewBox="0 0 33 26"><path d="M0.5,5.5 Q0.5,3.5 2.5,3.5 L8.5,3.5 L10.5,0.5 L19.5,0.5 L21.5,3.5 L28.5,3.5 Q30.5,3.5 30.5,5.5 L30.5,23.5 L0.5,23.5 Z" fill="#e6e6b8" stroke="#000"/>
<path d="M1,5.5 L8.5,5.5 L10.5,7.5 L19.5,7.5 L21.5,5.5 L30,5.5" fill="none" stroke="#000"/><path d="M8.5,3.5 L10.5,5.5 M21.5,3.5 L19.5,5.5" stroke="#000" fill="none"/>
<path d="M31.5,5 L31.5,25 M1,24.5 L32,24.5" stroke="#000" fill="none"/></svg>
<span class="t" style="left:135.3px;top:378.7px;line-height:16px;transform:translateX(-50%);">.local</span>
<svg style="left:303px;top:350px;" width="33" height="26" viewBox="0 0 33 26"><path d="M0.5,5.5 Q0.5,3.5 2.5,3.5 L8.5,3.5 L10.5,0.5 L19.5,0.5 L21.5,3.5 L28.5,3.5 Q30.5,3.5 30.5,5.5 L30.5,23.5 L0.5,23.5 Z" fill="#e6e6b8" stroke="#000"/>
<path d="M1,5.5 L8.5,5.5 L10.5,7.5 L19.5,7.5 L21.5,5.5 L30,5.5" fill="none" stroke="#000"/><path d="M8.5,3.5 L10.5,5.5 M21.5,3.5 L19.5,5.5" stroke="#000" fill="none"/>
<path d="M31.5,5 L31.5,25 M1,24.5 L32,24.5" stroke="#000" fill="none"/></svg>
<span class="t" style="left:319.3px;top:378.7px;line-height:16px;transform:translateX(-50%);">.mozilla</span>
<svg style="left:485.5px;top:344.7px;" width="34" height="34" viewBox="0 0 34 34"><g stroke="#555" fill="#b4e6c4"><path d="M4.5,4.5 L25,4.5 L28.5,8 L28.5,27.5 L4.5,27.5 Z"/><path d="M16.5,1 L32,16.5 L16.5,32 L1,16.5 Z" stroke-width="1.2"/></g><line x1="14" y1="6.5" x2="19" y2="6.5" stroke="#555"/><line x1="14" y1="8.5" x2="17" y2="8.5" stroke="#555"/><line x1="11" y1="10.5" x2="21" y2="10.5" stroke="#555"/><line x1="11" y1="12.5" x2="24" y2="12.5" stroke="#555"/><line x1="11" y1="14.5" x2="19" y2="14.5" stroke="#555"/><line x1="14" y1="16.5" x2="23" y2="16.5" stroke="#555"/><line x1="14" y1="18.5" x2="17" y2="18.5" stroke="#555"/><line x1="11" y1="20.5" x2="23" y2="20.5" stroke="#555"/><line x1="11" y1="22.5" x2="19" y2="22.5" stroke="#555"/><line x1="14" y1="24.5" x2="18" y2="24.5" stroke="#555"/><line x1="14" y1="26.5" x2="19" y2="26.5" stroke="#555"/><path d="M29.5,9 L29.5,28.5 L6,28.5" stroke="#999" stroke-dasharray="1 1" fill="none"/></svg>
<span class="t" style="left:503.3px;top:378.7px;line-height:16px;transform:translateX(-50%);">.openwin-init</span>
<svg style="left:123px;top:402px;" width="26" height="33" viewBox="0 0 26 33"><path d="M0.5,0.5 L17.5,0.5 L23.5,6.5 L23.5,30.5 L0.5,30.5 Z" fill="#c299b8" stroke="#000"/><path d="M17.5,0.5 L17.5,6.5 L23.5,6.5" fill="none" stroke="#000"/>
<path d="M24.5,7 L24.5,32 M1,31.5 L25,31.5" stroke="#000" fill="none"/><path d="M25.2,8 L25.2,32" stroke="#000" stroke-width="0.6" fill="none"/></svg>
<span class="t" style="left:135.3px;top:434.7px;line-height:16px;transform:translateX(-50%);">.openwin-menu</span>
<svg style="left:303px;top:406px;" width="33" height="26" viewBox="0 0 33 26"><path d="M0.5,5.5 Q0.5,3.5 2.5,3.5 L8.5,3.5 L10.5,0.5 L19.5,0.5 L21.5,3.5 L28.5,3.5 Q30.5,3.5 30.5,5.5 L30.5,23.5 L0.5,23.5 Z" fill="#e6e6b8" stroke="#000"/>
<path d="M1,5.5 L8.5,5.5 L10.5,7.5 L19.5,7.5 L21.5,5.5 L30,5.5" fill="none" stroke="#000"/><path d="M8.5,3.5 L10.5,5.5 M21.5,3.5 L19.5,5.5" stroke="#000" fill="none"/>
<path d="M31.5,5 L31.5,25 M1,24.5 L32,24.5" stroke="#000" fill="none"/></svg>
<span class="t" style="left:319.3px;top:434.7px;line-height:16px;transform:translateX(-50%);">.pki</span>
<svg style="left:487px;top:406px;" width="33" height="26" viewBox="0 0 33 26"><path d="M0.5,5.5 Q0.5,3.5 2.5,3.5 L8.5,3.5 L10.5,0.5 L19.5,0.5 L21.5,3.5 L28.5,3.5 Q30.5,3.5 30.5,5.5 L30.5,23.5 L0.5,23.5 Z" fill="#e6e6b8" stroke="#000"/>
<path d="M1,5.5 L8.5,5.5 L10.5,7.5 L19.5,7.5 L21.5,5.5 L30,5.5" fill="none" stroke="#000"/><path d="M8.5,3.5 L10.5,5.5 M21.5,3.5 L19.5,5.5" stroke="#000" fill="none"/>
<path d="M31.5,5 L31.5,25 M1,24.5 L32,24.5" stroke="#000" fill="none"/></svg>
<span class="t" style="left:503.3px;top:434.7px;line-height:16px;transform:translateX(-50%);">.puppetlabs</span>
<svg style="left:119px;top:458px;" width="33" height="32" viewBox="0 0 33 32"><rect x="0.5" y="0.5" width="30" height="30" fill="#b4e6e6" stroke="#777"/><path d="M31.5,2 L31.5,31" stroke="#777"/><g transform="translate(15.6 15.2) rotate(45) scale(1.1)" fill="none" stroke="#606060" stroke-width="2"><g transform="rotate(0)"><path d="M-8.3,-1.1 L-8.3,-6.5 A1.8,1.8 0 0 1 -4.7,-6.5 L-4.7,-2.9 A1.8,1.8 0 0 0 -1.1,-2.9 L-1.1,-8.3"/></g><g transform="rotate(90)"><path d="M-8.3,-1.1 L-8.3,-6.5 A1.8,1.8 0 0 1 -4.7,-6.5 L-4.7,-2.9 A1.8,1.8 0 0 0 -1.1,-2.9 L-1.1,-8.3"/></g><g transform="rotate(180)"><path d="M-8.3,-1.1 L-8.3,-6.5 A1.8,1.8 0 0 1 -4.7,-6.5 L-4.7,-2.9 A1.8,1.8 0 0 0 -1.1,-2.9 L-1.1,-8.3"/></g><g transform="rotate(270)"><path d="M-8.3,-1.1 L-8.3,-6.5 A1.8,1.8 0 0 1 -4.7,-6.5 L-4.7,-2.9 A1.8,1.8 0 0 0 -1.1,-2.9 L-1.1,-8.3"/></g></g></svg>
<svg style="left:307px;top:458px;" width="26" height="33" viewBox="0 0 26 33"><path d="M0.5,0.5 L17.5,0.5 L23.5,6.5 L23.5,30.5 L0.5,30.5 Z" fill="#c299b8" stroke="#000"/><path d="M17.5,0.5 L17.5,6.5 L23.5,6.5" fill="none" stroke="#000"/>
<path d="M24.5,7 L24.5,32 M1,31.5 L25,31.5" stroke="#000" fill="none"/><path d="M25.2,8 L25.2,32" stroke="#000" stroke-width="0.6" fill="none"/></svg>
<svg style="left:487px;top:462px;" width="33" height="26" viewBox="0 0 33 26"><path d="M0.5,5.5 Q0.5,3.5 2.5,3.5 L8.5,3.5 L10.5,0.5 L19.5,0.5 L21.5,3.5 L28.5,3.5 Q30.5,3.5 30.5,5.5 L30.5,23.5 L0.5,23.5 Z" fill="#e6e6b8" stroke="#000"/>
<path d="M1,5.5 L8.5,5.5 L10.5,7.5 L19.5,7.5 L21.5,5.5 L30,5.5" fill="none" stroke="#000"/><path d="M8.5,3.5 L10.5,5.5 M21.5,3.5 L19.5,5.5" stroke="#000" fill="none"/>
<path d="M31.5,5 L31.5,25 M1,24.5 L32,24.5" stroke="#000" fill="none"/></svg>
</div>
<div style="left:664px;top:426px;width:14px;height:6px;background:#cccccc;border:1px solid;border-color:#ffffff #666666 #666666 #ffffff;"></div>
<div style="left:664px;top:434px;width:14px;height:45.99px;background:#cccccc;border:1px solid;border-color:#ffffff #666666 #666666 #ffffff;"></div>
<div style="left:665px;top:448.33px;width:12px;height:1px;background:#666666;"></div>
<div style="left:665px;top:449.33px;width:12px;height:1px;background:#ffffff;"></div>
<div style="left:665px;top:463.66px;width:12px;height:1px;background:#666666;"></div>
<div style="left:665px;top:464.66px;width:12px;height:1px;background:#ffffff;"></div>
<svg style="left:667px;top:437px;" width="8" height="8" viewBox="0 0 8 8"><path d="M0,6 L4.0,1 L8,6 Z" fill="#666666"/></svg>
<svg style="left:667px;top:468.66px;" width="8" height="8" viewBox="0 0 8 8"><path d="M0,2 L4.0,7 L8,2 Z" fill="#666666"/></svg>
<div style="left:670px;top:481px;width:3px;height:63px;background:#666666;"></div>
<svg style="left:670px;top:544px;" width="3" height="362" viewBox="0 0 3 362"><defs><pattern id="stp" width="2" height="2" patternUnits="userSpaceOnUse"><rect width="1" height="1" fill="#666666"/><rect x="1" y="1" width="1" height="1" fill="#666666"/></pattern></defs><rect width="3" height="362" fill="url(#stp)"/></svg>
<div style="left:664px;top:907px;width:14px;height:6px;background:#cccccc;border:1px solid;border-color:#ffffff #666666 #666666 #ffffff;"></div>
<div style="left:20px;top:915px;width:6px;height:14px;background:#cccccc;border:1px solid;border-color:#ffffff #666666 #666666 #ffffff;"></div>
<svg style="left:28px;top:915px;" width="47" height="15" viewBox="0 0 47 15"><rect x="0.5" y="0.5" width="45" height="13" fill="none" stroke="#ffffff" stroke-dasharray="1 1"/><path d="M0.5,13.5 L45.5,13.5 L45.5,0.5" fill="none" stroke="#666666" stroke-dasharray="1 1"/>
<path d="M15.5,1 L15.5,13" stroke="#ffffff" stroke-dasharray="1 1"/><path d="M30.5,1 L30.5,13" stroke="#666666" stroke-dasharray="1 1"/>
<g fill="none" stroke="#888" stroke-dasharray="1 1"><path d="M10.5,3 L5.5,7 L10.5,11 M10.5,5.5 L8,7 L10.5,9"/><path d="M35.5,3 L40.5,7 L35.5,11 M35.5,5.5 L38,7 L35.5,9"/></g></svg>
<div style="left:76px;top:921px;width:578px;height:3px;background:#666666;"></div>
<div style="left:656px;top:915px;width:6px;height:14px;background:#cccccc;border:1px solid;border-color:#ffffff #666666 #666666 #ffffff;"></div>
<span class="t" style="left:30.3px;top:935px;line-height:16px;">Updated folder:  20 files deleted since last update.</span>
<div style="left:0px;top:69px;width:325px;height:160px;background:#cccccc;border-style:solid;border-width:1px;border-color:#ffffff #666666 #666666 #ffffff;"></div>
<svg style="left:0px;top:69px;" width="11" height="11" viewBox="0 0 11 11"><line x1="10.5" y1="0" x2="10.5" y2="5" stroke="#666666"/><line x1="11" y1="4.5" x2="5" y2="4.5" stroke="#666666"/><line x1="4.5" y1="5" x2="4.5" y2="11" stroke="#666666"/><line x1="5" y1="10.5" x2="0" y2="10.5" stroke="#666666"/></svg>
<svg style="left:314px;top:69px;" width="11" height="11" viewBox="0 0 11 11"><line x1="0.5" y1="0" x2="0.5" y2="5" stroke="#ffffff"/><line x1="0" y1="4.5" x2="6" y2="4.5" stroke="#666666"/><line x1="6.5" y1="5" x2="6.5" y2="11" stroke="#ffffff"/><line x1="6" y1="10.5" x2="11" y2="10.5" stroke="#666666"/></svg>
<svg style="left:0px;top:218px;" width="11" height="11" viewBox="0 0 11 11"><line x1="10.5" y1="11" x2="10.5" y2="6" stroke="#666666"/><line x1="11" y1="6.5" x2="5" y2="6.5" stroke="#ffffff"/><line x1="4.5" y1="6" x2="4.5" y2="0" stroke="#666666"/><line x1="5" y1="0.5" x2="0" y2="0.5" stroke="#ffffff"/></svg>
<svg style="left:314px;top:218px;" width="11" height="11" viewBox="0 0 11 11"><line x1="0.5" y1="11" x2="0.5" y2="6" stroke="#ffffff"/><line x1="0" y1="6.5" x2="6" y2="6.5" stroke="#ffffff"/><line x1="6.5" y1="6" x2="6.5" y2="0" stroke="#ffffff"/><line x1="6" y1="0.5" x2="11" y2="0.5" stroke="#ffffff"/></svg>
<div style="left:14px;top:74px;width:16px;height:15px;background:#cccccc;border:1px solid;border-color:#ffffff #666666 #666666 #ffffff;"></div>
<svg style="left:18px;top:78px;" width="9" height="8" viewBox="0 0 9 8"><path d="M0.8,0.8 L7.4,0.8 L4,6.6 Z" fill="#bdbdbd"/><path d="M0,0.5 L7.5,0.5" stroke="#666666"/><path d="M0.5,0.5 L3.6,6.6" stroke="#666666" fill="none"/><path d="M7,1 L4.2,6.8" stroke="#ffffff" fill="none"/></svg>
<span class="t" style="left:176.5px;top:73.3px;line-height:16px;font-weight:bold;letter-spacing:0.2px;transform:translateX(-50%);">VirtualDesktop</span>
<div style="left:12px;top:72px;width:308px;height:1px;background:#ffffff;"></div>
<div style="left:13px;top:73px;width:308px;height:1px;background:#666666;"></div>
<div style="left:5px;top:91px;width:315px;height:1px;background:#ffffff;"></div>
<div style="left:6px;top:92px;width:315px;height:1px;background:#666666;"></div>
<div style="left:5px;top:94px;width:315px;height:129px;overflow:hidden;">
<svg style="left:0px;top:0px;" width="315" height="129" viewBox="0 0 315 129"><ellipse cx="116" cy="52" rx="62" ry="41" fill="#bfbfbf"/><ellipse cx="116" cy="52" rx="62" ry="41" fill="none" stroke="#b5b5b5" stroke-width="2.5"/><ellipse cx="116" cy="52" rx="52" ry="33" fill="none" stroke="#b5b5b5" stroke-width="1" stroke-dasharray="2 2"/><path d="M111.63,55.55 L114.63,55.55 M113.13,54.05 L113.13,57.05" stroke="#b5b5b5" stroke-width="1.6"/><path d="M133.96,58.21 L138.96,58.21 M136.46,55.71 L136.46,60.71" stroke="#b5b5b5" stroke-width="1.6"/><path d="M80.45,40.09 L84.45,40.09 M82.45,38.09 L82.45,42.09" stroke="#b5b5b5" stroke-width="1.6"/><path d="M132.42,54.67 L135.42,54.67 M133.92,53.17 L133.92,56.17" stroke="#b5b5b5" stroke-width="1.6"/><path d="M115.87,66.5 L118.87,66.5 M117.37,65 L117.37,68" stroke="#b5b5b5" stroke-width="1.6"/><path d="M116.44,49.11 L120.44,49.11 M118.44,47.11 L118.44,51.11" stroke="#b5b5b5" stroke-width="1.6"/><path d="M97.61,40.76 L100.61,40.76 M99.11,39.26 L99.11,42.26" stroke="#b5b5b5" stroke-width="1.6"/><path d="M99.08,47.13 L103.08,47.13 M101.08,45.13 L101.08,49.13" stroke="#b5b5b5" stroke-width="1.6"/><path d="M148.43,58.53 L153.43,58.53 M150.93,56.03 L150.93,61.03" stroke="#b5b5b5" stroke-width="1.6"/><path d="M93.42,58.93 L98.42,58.93 M95.92,56.43 L95.92,61.43" stroke="#b5b5b5" stroke-width="1.6"/><path d="M87.57,45.36 L90.57,45.36 M89.07,43.86 L89.07,46.86" stroke="#b5b5b5" stroke-width="1.6"/><path d="M89.84,43.74 L94.84,43.74 M92.34,41.24 L92.34,46.24" stroke="#b5b5b5" stroke-width="1.6"/><path d="M139.27,62.78 L142.27,62.78 M140.77,61.28 L140.77,64.28" stroke="#b5b5b5" stroke-width="1.6"/><path d="M97.03,43.11 L104.03,43.11 M100.53,39.61 L100.53,46.61" stroke="#b5b5b5" stroke-width="1.6"/><path d="M115.87,39.91 L122.87,39.91 M119.37,36.41 L119.37,43.41" stroke="#b5b5b5" stroke-width="1.6"/><path d="M107.19,57 L111.19,57 M109.19,55 L109.19,59" stroke="#b5b5b5" stroke-width="1.6"/><path d="M110.23,45.9 L115.23,45.9 M112.73,43.4 L112.73,48.4" stroke="#b5b5b5" stroke-width="1.6"/><path d="M75.77,48.37 L82.77,48.37 M79.27,44.87 L79.27,51.87" stroke="#b5b5b5" stroke-width="1.6"/><path d="M104.67,77.1 L107.67,77.1 M106.17,75.6 L106.17,78.6" stroke="#b5b5b5" stroke-width="1.6"/><path d="M106.51,51.67 L111.51,51.67 M109.01,49.17 L109.01,54.17" stroke="#b5b5b5" stroke-width="1.6"/><path d="M126.5,62.52 L129.5,62.52 M128,61.02 L128,64.02" stroke="#b5b5b5" stroke-width="1.6"/><path d="M116.71,51.52 L121.71,51.52 M119.21,49.02 L119.21,54.02" stroke="#b5b5b5" stroke-width="1.6"/><path d="M104.52,59.79 L111.52,59.79 M108.02,56.29 L108.02,63.29" stroke="#b5b5b5" stroke-width="1.6"/><path d="M97.5,46.22 L100.5,46.22 M99,44.72 L99,47.72" stroke="#b5b5b5" stroke-width="1.6"/><path d="M133.44,47.74 L136.44,47.74 M134.94,46.24 L134.94,49.24" stroke="#b5b5b5" stroke-width="1.6"/><path d="M140.17,58.88 L147.17,58.88 M143.67,55.38 L143.67,62.38" stroke="#b5b5b5" stroke-width="1.6"/><ellipse cx="102.46" cy="103.29" rx="10" ry="3.3" fill="#b5b5b5" transform="rotate(-201.94 102.46 103.29)"/><ellipse cx="80.29" cy="98.78" rx="10" ry="3.3" fill="#b5b5b5" transform="rotate(-190.76 80.29 98.78)"/><ellipse cx="61.33" cy="90.52" rx="10" ry="3.3" fill="#b5b5b5" transform="rotate(-177.37 61.33 90.52)"/><ellipse cx="47.29" cy="79.25" rx="10" ry="3.3" fill="#b5b5b5" transform="rotate(-159.72 47.29 79.25)"/><ellipse cx="39.43" cy="65.97" rx="10" ry="3.3" fill="#b5b5b5" transform="rotate(-135.88 39.43 65.97)"/><ellipse cx="38.46" cy="51.88" rx="10" ry="3.3" fill="#b5b5b5" transform="rotate(-107.7 38.46 51.88)"/><ellipse cx="44.47" cy="38.26" rx="10" ry="3.3" fill="#b5b5b5" transform="rotate(-82.19 44.47 38.26)"/><ellipse cx="56.91" cy="26.32" rx="10" ry="3.3" fill="#b5b5b5" transform="rotate(-62.97 56.91 26.32)"/><ellipse cx="74.67" cy="17.14" rx="10" ry="3.3" fill="#b5b5b5" transform="rotate(-48.63 74.67 17.14)"/><ellipse cx="100.02" cy="111.16" rx="9" ry="3.3" fill="#b5b5b5" transform="rotate(-201.98 100.02 111.16)"/><ellipse cx="70.4" cy="104.77" rx="9" ry="3.3" fill="#b5b5b5" transform="rotate(-189.16 70.4 104.77)"/><ellipse cx="46.12" cy="92.77" rx="9" ry="3.3" fill="#b5b5b5" transform="rotate(-173.08 46.12 92.77)"/><ellipse cx="30.03" cy="76.58" rx="9" ry="3.3" fill="#b5b5b5" transform="rotate(-150.51 30.03 76.58)"/><ellipse cx="24.02" cy="58.1" rx="9" ry="3.3" fill="#b5b5b5" transform="rotate(-119.91 24.02 58.1)"/><ellipse cx="28.79" cy="39.48" rx="9" ry="3.3" fill="#b5b5b5" transform="rotate(-88.66 28.79 39.48)"/><ellipse cx="43.79" cy="22.92" rx="9" ry="3.3" fill="#b5b5b5" transform="rotate(-65.14 43.79 22.92)"/><ellipse cx="67.25" cy="10.36" rx="9" ry="3.3" fill="#b5b5b5" transform="rotate(-48.48 67.25 10.36)"/><ellipse cx="129.54" cy="103.29" rx="10" ry="3.3" fill="#b5b5b5" transform="rotate(21.94 129.54 103.29)"/><ellipse cx="151.71" cy="98.78" rx="10" ry="3.3" fill="#b5b5b5" transform="rotate(10.76 151.71 98.78)"/><ellipse cx="170.67" cy="90.52" rx="10" ry="3.3" fill="#b5b5b5" transform="rotate(-2.63 170.67 90.52)"/><ellipse cx="184.71" cy="79.25" rx="10" ry="3.3" fill="#b5b5b5" transform="rotate(-20.28 184.71 79.25)"/><ellipse cx="192.57" cy="65.97" rx="10" ry="3.3" fill="#b5b5b5" transform="rotate(-44.12 192.57 65.97)"/><ellipse cx="193.54" cy="51.88" rx="10" ry="3.3" fill="#b5b5b5" transform="rotate(-72.3 193.54 51.88)"/><ellipse cx="187.53" cy="38.26" rx="10" ry="3.3" fill="#b5b5b5" transform="rotate(-97.81 187.53 38.26)"/><ellipse cx="175.09" cy="26.32" rx="10" ry="3.3" fill="#b5b5b5" transform="rotate(-117.03 175.09 26.32)"/><ellipse cx="157.33" cy="17.14" rx="10" ry="3.3" fill="#b5b5b5" transform="rotate(-131.37 157.33 17.14)"/><ellipse cx="131.98" cy="111.16" rx="9" ry="3.3" fill="#b5b5b5" transform="rotate(21.98 131.98 111.16)"/><ellipse cx="161.6" cy="104.77" rx="9" ry="3.3" fill="#b5b5b5" transform="rotate(9.16 161.6 104.77)"/><ellipse cx="185.88" cy="92.77" rx="9" ry="3.3" fill="#b5b5b5" transform="rotate(-6.92 185.88 92.77)"/><ellipse cx="201.97" cy="76.58" rx="9" ry="3.3" fill="#b5b5b5" transform="rotate(-29.49 201.97 76.58)"/><ellipse cx="207.98" cy="58.1" rx="9" ry="3.3" fill="#b5b5b5" transform="rotate(-60.09 207.98 58.1)"/><ellipse cx="203.21" cy="39.48" rx="9" ry="3.3" fill="#b5b5b5" transform="rotate(-91.34 203.21 39.48)"/><ellipse cx="188.21" cy="22.92" rx="9" ry="3.3" fill="#b5b5b5" transform="rotate(-114.86 188.21 22.92)"/><ellipse cx="164.75" cy="10.36" rx="9" ry="3.3" fill="#b5b5b5" transform="rotate(-131.52 164.75 10.36)"/><path d="M102,104 Q116,111 130,104" stroke="#b5b5b5" stroke-width="3" fill="none"/><ellipse cx="341" cy="52" rx="62" ry="41" fill="#bfbfbf"/><ellipse cx="341" cy="52" rx="62" ry="41" fill="none" stroke="#b5b5b5" stroke-width="2.5"/><ellipse cx="341" cy="52" rx="52" ry="33" fill="none" stroke="#b5b5b5" stroke-width="1" stroke-dasharray="2 2"/><path d="M336.63,55.55 L339.63,55.55 M338.13,54.05 L338.13,57.05" stroke="#b5b5b5" stroke-width="1.6"/><path d="M358.96,58.21 L363.96,58.21 M361.46,55.71 L361.46,60.71" stroke="#b5b5b5" stroke-width="1.6"/><path d="M305.45,40.09 L309.45,40.09 M307.45,38.09 L307.45,42.09" stroke="#b5b5b5" stroke-width="1.6"/><path d="M357.42,54.67 L360.42,54.67 M358.92,53.17 L358.92,56.17" stroke="#b5b5b5" stroke-width="1.6"/><path d="M340.87,66.5 L343.87,66.5 M342.37,65 L342.37,68" stroke="#b5b5b5" stroke-width="1.6"/><path d="M341.44,49.11 L345.44,49.11 M343.44,47.11 L343.44,51.11" stroke="#b5b5b5" stroke-width="1.6"/><path d="M322.61,40.76 L325.61,40.76 M324.11,39.26 L324.11,42.26" stroke="#b5b5b5" stroke-width="1.6"/><path d="M324.08,47.13 L328.08,47.13 M326.08,45.13 L326.08,49.13" stroke="#b5b5b5" stroke-width="1.6"/><path d="M373.43,58.53 L378.43,58.53 M375.93,56.03 L375.93,61.03" stroke="#b5b5b5" stroke-width="1.6"/><path d="M318.42,58.93 L323.42,58.93 M320.92,56.43 L320.92,61.43" stroke="#b5b5b5" stroke-width="1.6"/><path d="M312.57,45.36 L315.57,45.36 M314.07,43.86 L314.07,46.86" stroke="#b5b5b5" stroke-width="1.6"/><path d="M314.84,43.74 L319.84,43.74 M317.34,41.24 L317.34,46.24" stroke="#b5b5b5" stroke-width="1.6"/><path d="M364.27,62.78 L367.27,62.78 M365.77,61.28 L365.77,64.28" stroke="#b5b5b5" stroke-width="1.6"/><path d="M322.03,43.11 L329.03,43.11 M325.53,39.61 L325.53,46.61" stroke="#b5b5b5" stroke-width="1.6"/><path d="M340.87,39.91 L347.87,39.91 M344.37,36.41 L344.37,43.41" stroke="#b5b5b5" stroke-width="1.6"/><path d="M332.19,57 L336.19,57 M334.19,55 L334.19,59" stroke="#b5b5b5" stroke-width="1.6"/><path d="M335.23,45.9 L340.23,45.9 M337.73,43.4 L337.73,48.4" stroke="#b5b5b5" stroke-width="1.6"/><path d="M300.77,48.37 L307.77,48.37 M304.27,44.87 L304.27,51.87" stroke="#b5b5b5" stroke-width="1.6"/><path d="M329.67,77.1 L332.67,77.1 M331.17,75.6 L331.17,78.6" stroke="#b5b5b5" stroke-width="1.6"/><path d="M331.51,51.67 L336.51,51.67 M334.01,49.17 L334.01,54.17" stroke="#b5b5b5" stroke-width="1.6"/><path d="M351.5,62.52 L354.5,62.52 M353,61.02 L353,64.02" stroke="#b5b5b5" stroke-width="1.6"/><path d="M341.71,51.52 L346.71,51.52 M344.21,49.02 L344.21,54.02" stroke="#b5b5b5" stroke-width="1.6"/><path d="M329.52,59.79 L336.52,59.79 M333.02,56.29 L333.02,63.29" stroke="#b5b5b5" stroke-width="1.6"/><path d="M322.5,46.22 L325.5,46.22 M324,44.72 L324,47.72" stroke="#b5b5b5" stroke-width="1.6"/><path d="M358.44,47.74 L361.44,47.74 M359.94,46.24 L359.94,49.24" stroke="#b5b5b5" stroke-width="1.6"/><path d="M365.17,58.88 L372.17,58.88 M368.67,55.38 L368.67,62.38" stroke="#b5b5b5" stroke-width="1.6"/><ellipse cx="327.46" cy="103.29" rx="10" ry="3.3" fill="#b5b5b5" transform="rotate(-201.94 327.46 103.29)"/><ellipse cx="305.29" cy="98.78" rx="10" ry="3.3" fill="#b5b5b5" transform="rotate(-190.76 305.29 98.78)"/><ellipse cx="286.33" cy="90.52" rx="10" ry="3.3" fill="#b5b5b5" transform="rotate(-177.37 286.33 90.52)"/><ellipse cx="272.29" cy="79.25" rx="10" ry="3.3" fill="#b5b5b5" transform="rotate(-159.72 272.29 79.25)"/><ellipse cx="264.43" cy="65.97" rx="10" ry="3.3" fill="#b5b5b5" transform="rotate(-135.88 264.43 65.97)"/><ellipse cx="263.46" cy="51.88" rx="10" ry="3.3" fill="#b5b5b5" transform="rotate(-107.7 263.46 51.88)"/><ellipse cx="269.47" cy="38.26" rx="10" ry="3.3" fill="#b5b5b5" transform="rotate(-82.19 269.47 38.26)"/><ellipse cx="281.91" cy="26.32" rx="10" ry="3.3" fill="#b5b5b5" transform="rotate(-62.97 281.91 26.32)"/><ellipse cx="299.67" cy="17.14" rx="10" ry="3.3" fill="#b5b5b5" transform="rotate(-48.63 299.67 17.14)"/><ellipse cx="325.02" cy="111.16" rx="9" ry="3.3" fill="#b5b5b5" transform="rotate(-201.98 325.02 111.16)"/><ellipse cx="295.4" cy="104.77" rx="9" ry="3.3" fill="#b5b5b5" transform="rotate(-189.16 295.4 104.77)"/><ellipse cx="271.12" cy="92.77" rx="9" ry="3.3" fill="#b5b5b5" transform="rotate(-173.08 271.12 92.77)"/><ellipse cx="255.03" cy="76.58" rx="9" ry="3.3" fill="#b5b5b5" transform="rotate(-150.51 255.03 76.58)"/><ellipse cx="249.02" cy="58.1" rx="9" ry="3.3" fill="#b5b5b5" transform="rotate(-119.91 249.02 58.1)"/><ellipse cx="253.79" cy="39.48" rx="9" ry="3.3" fill="#b5b5b5" transform="rotate(-88.66 253.79 39.48)"/><ellipse cx="268.79" cy="22.92" rx="9" ry="3.3" fill="#b5b5b5" transform="rotate(-65.14 268.79 22.92)"/><ellipse cx="292.25" cy="10.36" rx="9" ry="3.3" fill="#b5b5b5" transform="rotate(-48.48 292.25 10.36)"/><ellipse cx="354.54" cy="103.29" rx="10" ry="3.3" fill="#b5b5b5" transform="rotate(21.94 354.54 103.29)"/><ellipse cx="376.71" cy="98.78" rx="10" ry="3.3" fill="#b5b5b5" transform="rotate(10.76 376.71 98.78)"/><ellipse cx="395.67" cy="90.52" rx="10" ry="3.3" fill="#b5b5b5" transform="rotate(-2.63 395.67 90.52)"/><ellipse cx="409.71" cy="79.25" rx="10" ry="3.3" fill="#b5b5b5" transform="rotate(-20.28 409.71 79.25)"/><ellipse cx="417.57" cy="65.97" rx="10" ry="3.3" fill="#b5b5b5" transform="rotate(-44.12 417.57 65.97)"/><ellipse cx="418.54" cy="51.88" rx="10" ry="3.3" fill="#b5b5b5" transform="rotate(-72.3 418.54 51.88)"/><ellipse cx="412.53" cy="38.26" rx="10" ry="3.3" fill="#b5b5b5" transform="rotate(-97.81 412.53 38.26)"/><ellipse cx="400.09" cy="26.32" rx="10" ry="3.3" fill="#b5b5b5" transform="rotate(-117.03 400.09 26.32)"/><ellipse cx="382.33" cy="17.14" rx="10" ry="3.3" fill="#b5b5b5" transform="rotate(-131.37 382.33 17.14)"/><ellipse cx="356.98" cy="111.16" rx="9" ry="3.3" fill="#b5b5b5" transform="rotate(21.98 356.98 111.16)"/><ellipse cx="386.6" cy="104.77" rx="9" ry="3.3" fill="#b5b5b5" transform="rotate(9.16 386.6 104.77)"/><ellipse cx="410.88" cy="92.77" rx="9" ry="3.3" fill="#b5b5b5" transform="rotate(-6.92 410.88 92.77)"/><ellipse cx="426.97" cy="76.58" rx="9" ry="3.3" fill="#b5b5b5" transform="rotate(-29.49 426.97 76.58)"/><ellipse cx="432.98" cy="58.1" rx="9" ry="3.3" fill="#b5b5b5" transform="rotate(-60.09 432.98 58.1)"/><ellipse cx="428.21" cy="39.48" rx="9" ry="3.3" fill="#b5b5b5" transform="rotate(-91.34 428.21 39.48)"/><ellipse cx="413.21" cy="22.92" rx="9" ry="3.3" fill="#b5b5b5" transform="rotate(-114.86 413.21 22.92)"/><ellipse cx="389.75" cy="10.36" rx="9" ry="3.3" fill="#b5b5b5" transform="rotate(-131.52 389.75 10.36)"/><path d="M327,104 Q341,111 355,104" stroke="#b5b5b5" stroke-width="3" fill="none"/></svg>
</div>
<svg style="left:110px;top:94px;" width="1" height="129" viewBox="0 0 1 129"><line x1="0.5" y1="0" x2="0.5" y2="129" stroke="#000" stroke-dasharray="3 3"/></svg>
<svg style="left:215px;top:94px;" width="1" height="129" viewBox="0 0 1 129"><line x1="0.5" y1="0" x2="0.5" y2="129" stroke="#000" stroke-dasharray="3 3"/></svg>
<svg style="left:110px;top:159px;" width="210" height="1" viewBox="0 0 210 1"><line x1="0" y1="0.5" x2="210" y2="0.5" stroke="#000" stroke-dasharray="3 3"/></svg>
<div style="left:5px;top:94px;width:106px;height:66px;border:1px solid #000;"></div>
<div style="left:72px;top:142px;width:26px;height:8px;border:1px solid #000;background:#cccccc;"></div>
<div style="left:31px;top:142px;width:42px;height:16px;border:1px solid #000;background:#cccccc;"></div>
<div style="left:102px;top:100px;width:3px;height:21px;border:1px solid #000;background:#cccccc;"></div>
<div style="left:5px;top:95px;width:21px;height:10px;border:1px solid #000;background:#cccccc;"></div>
<div style="left:27px;top:95px;width:14px;height:8px;border:1px solid #000;background:#cccccc;"></div>
<div style="left:33px;top:99px;width:70px;height:44px;border:1px solid #000;background:#cccccc;"></div>
<div style="left:5px;top:106px;width:44px;height:46px;border:2px solid #000;background:#cccccc;"></div>
<div style="left:6px;top:96px;width:19px;height:8px;overflow:hidden;">
<span class="t" style="left:0.5px;top:-0.07px;line-height:10px;font-size:8.3px;font-family:'DejaVu Sans Mono','Liberation Mono',monospace;font-weight:bold;letter-spacing:0;">Virt</span>
</div>
<div style="left:34px;top:100px;width:68px;height:12px;overflow:hidden;">
<span class="t" style="left:1px;top:-0.07px;line-height:10px;font-size:8.3px;font-family:'DejaVu Sans Mono','Liberation Mono',monospace;font-weight:bold;letter-spacing:0;">olittable</span>
</div>
<div style="left:7px;top:108px;width:40px;height:12px;overflow:hidden;">
<span class="t" style="left:0.6px;top:1.33px;line-height:10px;font-size:8.3px;font-family:'DejaVu Sans Mono','Liberation Mono',monospace;font-weight:bold;letter-spacing:0;">File Man</span>
</div>
</div>
</body></html>
